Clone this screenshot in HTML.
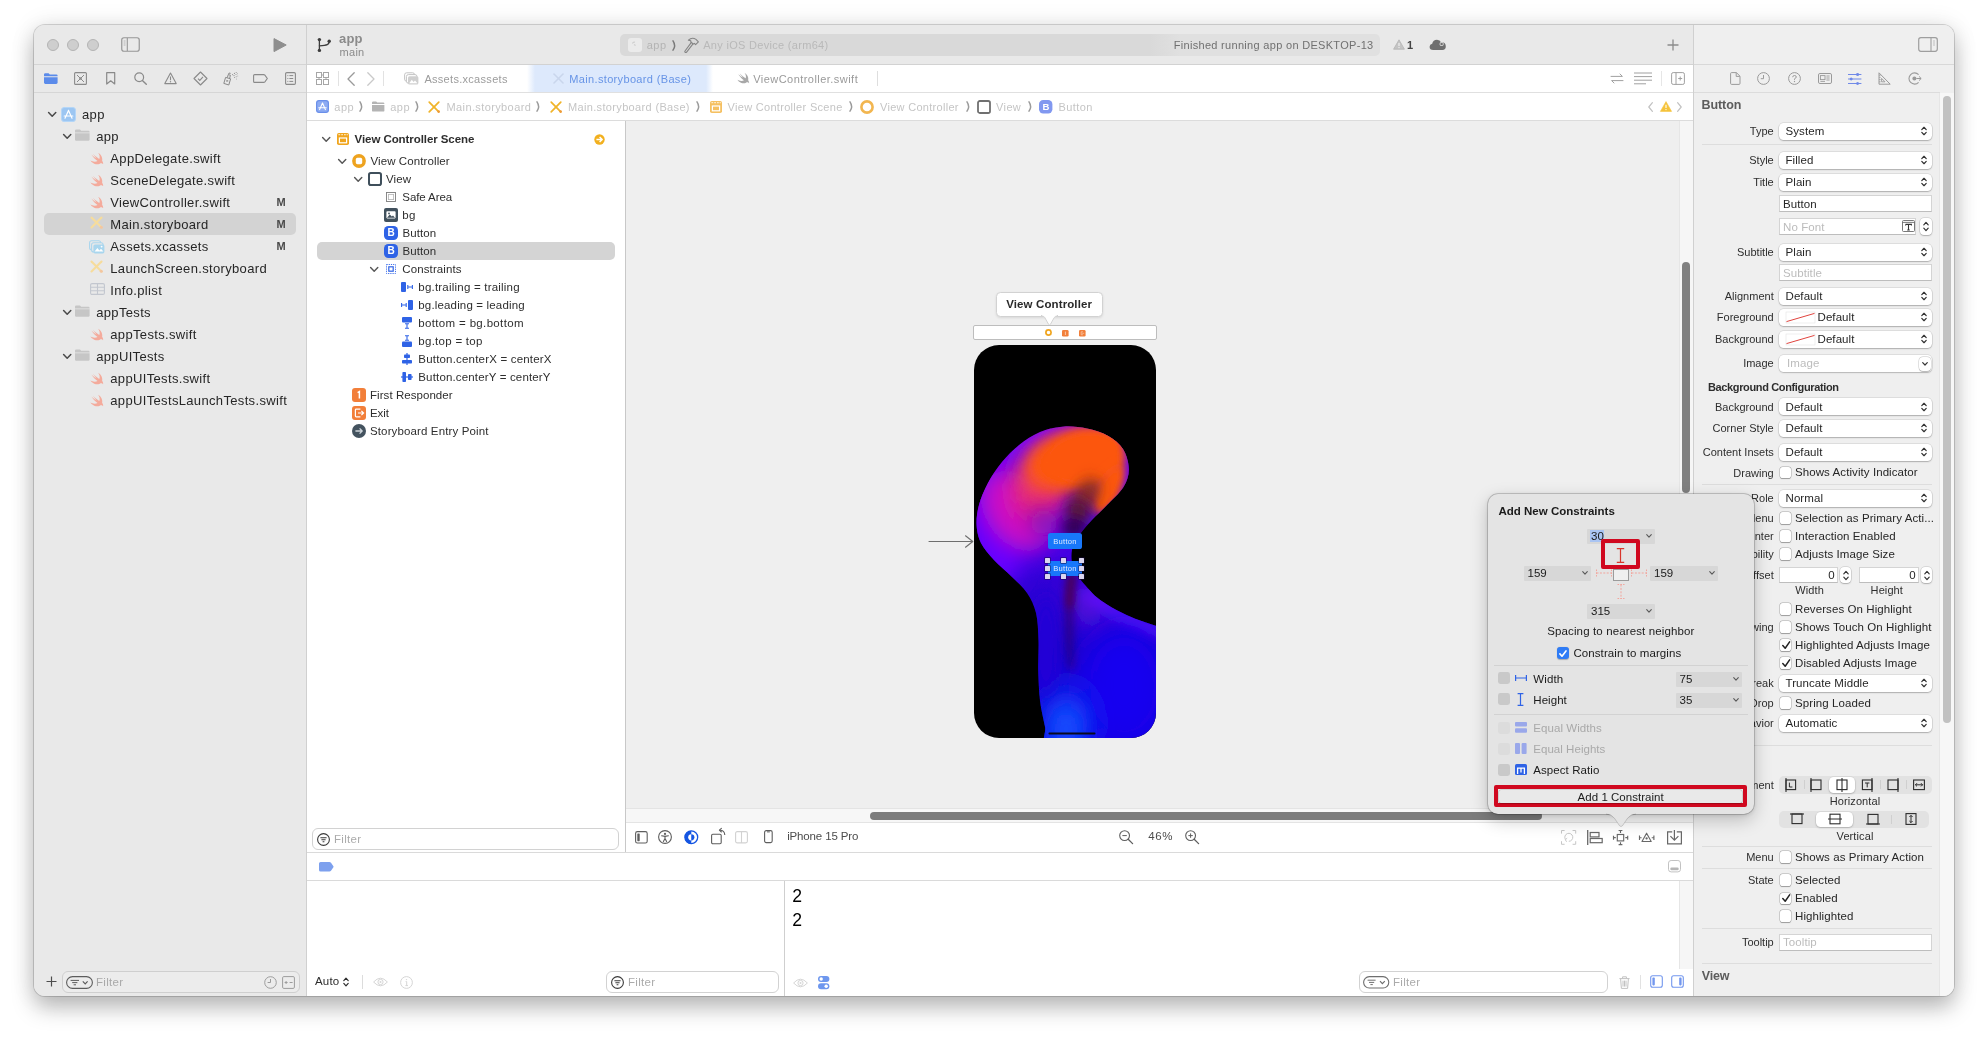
<!DOCTYPE html><html><head><meta charset="utf-8"><title>Xcode</title><style>
*{box-sizing:border-box;margin:0;padding:0}
html,body{width:1988px;height:1038px;overflow:hidden;background:#fff}
body{font-family:"Liberation Sans",sans-serif;position:relative;color:#2b2b2b}
.a{position:absolute}
.t{position:absolute;white-space:pre;line-height:1}
#clip{will-change:transform}
svg{position:absolute;overflow:visible}
#win{position:absolute;left:34px;top:25px;width:1920px;height:971px;border-radius:11px;background:#e9e9e9;
 box-shadow:0 0 0 1px rgba(0,0,0,.15),0 12px 22px rgba(0,0,0,.25),0 0 24px rgba(0,0,0,.10);overflow:hidden}
#clip{position:absolute;left:34px;top:25px;width:1920px;height:971px;border-radius:11px;overflow:hidden}
</style></head><body><div id="win"></div>
<div id="clip">
<div class="a" style="left:-34px;top:-25px;width:1988px;height:1038px">
<div class="a" style="left:34px;top:25px;width:1920px;height:40px;background:#e9e9e9;"></div>
<div class="a" style="left:34px;top:64px;width:273px;height:1px;background:#d4d4d4;"></div>
<div class="a" style="left:34px;top:65px;width:272px;height:28px;background:#e9e9e9;"></div>
<div class="a" style="left:34px;top:92px;width:272px;height:1px;background:#d6d6d6;"></div>
<div class="a" style="left:34px;top:93px;width:272px;height:903px;background:#e9e9e9;"></div>
<div class="a" style="left:306px;top:25px;width:1px;height:971px;background:#d0d0d0;"></div>
<div class="a" style="left:307px;top:64px;width:1387px;height:1px;background:#d2d2d2;"></div>
<div class="a" style="left:307px;top:65px;width:1387px;height:27px;background:#ffffff;"></div>
<div class="a" style="left:307px;top:92px;width:1387px;height:1px;background:#e0e0e0;"></div>
<div class="a" style="left:307px;top:93px;width:1387px;height:27px;background:#ffffff;"></div>
<div class="a" style="left:307px;top:120px;width:1387px;height:1px;background:#dcdcdc;"></div>
<div class="a" style="left:307px;top:121px;width:318px;height:731px;background:#ffffff;"></div>
<div class="a" style="left:625px;top:121px;width:1px;height:731px;background:#c8c8c8;"></div>
<div class="a" style="left:626px;top:121px;width:1068px;height:687px;background:#efefef;"></div>
<div class="a" style="left:626px;top:808px;width:1068px;height:15px;background:#f7f7f7;"></div>
<div class="a" style="left:626px;top:808px;width:1068px;height:1px;background:#e4e4e4;"></div>
<div class="a" style="left:626px;top:822px;width:1068px;height:1px;background:#e4e4e4;"></div>
<div class="a" style="left:626px;top:823px;width:1068px;height:29px;background:#ffffff;"></div>
<div class="a" style="left:307px;top:852px;width:1387px;height:1px;background:#dadada;"></div>
<div class="a" style="left:307px;top:853px;width:1387px;height:27px;background:#ffffff;"></div>
<div class="a" style="left:307px;top:880px;width:1387px;height:1px;background:#dadada;"></div>
<div class="a" style="left:307px;top:881px;width:1387px;height:115px;background:#ffffff;"></div>
<div class="a" style="left:784px;top:881px;width:1px;height:115px;background:#cfcfcf;"></div>
<div class="a" style="left:1693px;top:25px;width:1px;height:971px;background:#d0d0d0;"></div>
<div class="a" style="left:1694px;top:25px;width:260px;height:40px;background:#efefef;"></div>
<div class="a" style="left:1694px;top:64px;width:260px;height:1px;background:#d8d8d8;"></div>
<div class="a" style="left:1694px;top:65px;width:260px;height:931px;background:#efefef;"></div>
<div class="a" style="left:1694px;top:92px;width:246px;height:1px;background:#dcdcdc;"></div>
<div class="a" style="left:1939px;top:93px;width:15px;height:903px;background:#f7f7f7;"></div>
<div class="a" style="left:1939px;top:93px;width:1px;height:903px;background:#e6e6e6;"></div>
<div class="a" style="left:47px;top:39px;width:12px;height:12px;background:#cecece;border-radius:50%;border:1px solid #b4b4b4;"></div>
<div class="a" style="left:67px;top:39px;width:12px;height:12px;background:#cecece;border-radius:50%;border:1px solid #b4b4b4;"></div>
<div class="a" style="left:87px;top:39px;width:12px;height:12px;background:#cecece;border-radius:50%;border:1px solid #b4b4b4;"></div>
<svg style="left:121px;top:37px;" width="19" height="15" viewBox="0 0 19 15"><rect x="0.75" y="0.75" width="17.5" height="13.5" rx="2.2" fill="none" stroke="#969696" stroke-width="1.2"/><line x1="6.3" y1="1" x2="6.3" y2="14" stroke="#969696" stroke-width="1.1"/><path d="M2.7 4h1.8M2.7 6h1.8M2.7 8h1.8" stroke="#a8a8a8" stroke-width=".8"/></svg>
<svg style="left:273px;top:38px;" width="14" height="14" viewBox="0 0 14 14"><path d="M1 0.6 L13.2 7 L1 13.6 Z" fill="#8e8e8e" stroke="#8e8e8e" stroke-width="1" stroke-linejoin="round"/></svg>
<svg style="left:316.5px;top:36.5px;" width="15" height="16" viewBox="0 0 15 16"><g fill="none" stroke="#3c3c3c" stroke-width="1.3" stroke-linecap="round"><path d="M2.4 3V13"/><path d="M12.2 4.6 C12.2 7.6 10.4 8.4 2.4 8.8"/></g><circle cx="2.4" cy="2.6" r="1.7" fill="#3c3c3c"/><circle cx="2.4" cy="13.4" r="1.7" fill="#3c3c3c"/><circle cx="12.2" cy="4.2" r="1.7" fill="#3c3c3c"/></svg>
<div class="t" style="left:339px;top:32.0px;font-size:13px;color:#8b8b8b;font-weight:700;letter-spacing:0.2px;">app</div>
<div class="t" style="left:339.5px;top:46.5px;font-size:11px;color:#8b8b8b;font-weight:400;letter-spacing:0.3px;">main</div>
<svg style="left:44px;top:72px;" width="14" height="13" viewBox="0 0 14 13"><path d="M0 2.6 Q0 1.2 1.4 1.2 H4.6 L5.8 2.4 H12.4 Q13.6 2.4 13.6 3.6 V4.2 H0Z" fill="#5b8bea"/><path d="M0 5.2 H13.6 V10.6 Q13.6 12 12.2 12 H1.4 Q0 12 0 10.6Z" fill="#5b8bea"/></svg>
<svg style="left:74px;top:72px;" width="13" height="13" viewBox="0 0 13 13"><rect x=".6" y=".6" width="11.8" height="11.8" rx="1" fill="none" stroke="#8a8a8a" stroke-width="1.1"/><path d="M3 3 L10 10 M10 3 L3 10" stroke="#8a8a8a" stroke-width="1"/><circle cx="6.5" cy="6.5" r="1.2" fill="#8a8a8a"/></svg>
<svg style="left:106px;top:72px;" width="10" height="13" viewBox="0 0 10 13"><path d="M.7 .7 H8.7 V12 L4.7 8.8 L.7 12Z" fill="none" stroke="#8a8a8a" stroke-width="1.2" stroke-linejoin="round"/></svg>
<svg style="left:134px;top:72px;" width="13" height="13" viewBox="0 0 13 13"><circle cx="5.2" cy="5.2" r="4.4" fill="none" stroke="#8a8a8a" stroke-width="1.2"/><path d="M8.4 8.4 L12.3 12.3" stroke="#8a8a8a" stroke-width="1.4" stroke-linecap="round"/></svg>
<svg style="left:164px;top:72px;" width="13" height="13" viewBox="0 0 13 13"><path d="M6.5 1 L12.2 11.6 H.8Z" fill="none" stroke="#8a8a8a" stroke-width="1.1" stroke-linejoin="round"/><path d="M6.5 4.6V8.2" stroke="#8a8a8a" stroke-width="1.1"/><circle cx="6.5" cy="9.8" r=".7" fill="#8a8a8a"/></svg>
<svg style="left:193px;top:71px;" width="15" height="15" viewBox="0 0 15 15"><path d="M7.5 1 L14 7.5 L7.5 14 L1 7.5Z" fill="none" stroke="#8a8a8a" stroke-width="1.1" stroke-linejoin="round"/><path d="M5 7.6 L6.8 9.4 L10 5.8" fill="none" stroke="#8a8a8a" stroke-width="1.1"/></svg>
<svg style="left:223px;top:71px;" width="16" height="15" viewBox="0 0 16 15"><g fill="none" stroke="#8a8a8a" stroke-width="1"><path d="M2.6 6.4 L7.6 7.8 L5.8 14 L.8 12.4Z" stroke-linejoin="round"/><path d="M4.4 6.6 L5.2 3.6 L7.4 4.2 L6.6 7.4"/><path d="M5.6 3.4 L6 2 L7.6 2.4"/><path d="M3.2 9.2l2 1.4M5.2 9l-1.8 1.8" stroke-width=".8"/></g><g fill="#8a8a8a"><circle cx="9.6" cy="3.6" r=".55"/><circle cx="11.4" cy="2.4" r=".55"/><circle cx="13.2" cy="1.4" r=".5"/><circle cx="11" cy="4.6" r=".55"/><circle cx="13" cy="3.6" r=".5"/><circle cx="14.6" cy="2.8" r=".45"/><circle cx="11.6" cy="6.6" r=".5"/><circle cx="13.2" cy="5.8" r=".5"/><circle cx="14.8" cy="5" r=".45"/><circle cx="13.4" cy="8" r=".45"/></g></svg>
<svg style="left:253px;top:74px;" width="15" height="9" viewBox="0 0 15 9"><path d="M1.6 .6 H10.6 Q11.4 .6 11.9 1.2 L14.3 4.5 L11.9 7.8 Q11.4 8.4 10.6 8.4 H1.6 Q.6 8.4 .6 7.4 V1.6 Q.6 .6 1.6 .6Z" fill="none" stroke="#8a8a8a" stroke-width="1.1"/></svg>
<svg style="left:285px;top:72px;" width="11" height="13" viewBox="0 0 11 13"><rect x=".6" y=".6" width="9.8" height="11.8" rx="1.2" fill="none" stroke="#8a8a8a" stroke-width="1.1"/><path d="M4.4 3.6H8.2M4.4 6.5H8.2M4.4 9.4H8.2" stroke="#8a8a8a" stroke-width="1"/><path d="M2.4 3.6h.9M2.4 6.5h.9M2.4 9.4h.9" stroke="#8a8a8a" stroke-width="1"/></svg>
<div class="a" style="left:44px;top:213px;width:252px;height:22px;background:#d3d3d3;border-radius:5px;"></div>
<svg style="left:48.3px;top:112.1px;" width="8.4" height="4.8" viewBox="0 0 8.4 4.8"><path d="M.6 .5 L4.2 4.3 L7.800000000000001 .5" fill="none" stroke="#4a4a4a" stroke-width="1.5" stroke-linecap="round" stroke-linejoin="round"/></svg>
<svg style="left:61px;top:107.0px;" width="15" height="15" viewBox="0 0 15 15"><rect x=".5" y=".5" width="14" height="14" rx="2.6" fill="#9cc6f2" stroke="#b4d6f8" stroke-width="1"/><g stroke="#fff" stroke-width="1.2" stroke-linecap="round" fill="none"><path d="M7.5 3.4 L4 11.2M7.5 3.4 L11 11.2M3.2 9 H11.8"/></g></svg>
<div class="t" style="left:82px;top:108.0px;font-size:13px;color:#262626;font-weight:400;letter-spacing:0.34px;">app</div>
<svg style="left:62.6px;top:134.1px;" width="8.4" height="4.8" viewBox="0 0 8.4 4.8"><path d="M.6 .5 L4.2 4.3 L7.800000000000001 .5" fill="none" stroke="#4a4a4a" stroke-width="1.5" stroke-linecap="round" stroke-linejoin="round"/></svg>
<svg style="left:75px;top:129.0px;" width="15" height="12" viewBox="0 0 15 12"><path d="M0 1.8 Q0 .5 1.3 .5 H5 L6.2 1.7 H13.4 Q14.6 1.7 14.6 2.9 V3.4 H0Z" fill="#c6c6c6"/><path d="M0 4.3 H14.6 V10.4 Q14.6 11.7 13.3 11.7 H1.3 Q0 11.7 0 10.4Z" fill="#c6c6c6"/></svg>
<div class="t" style="left:96.2px;top:130.0px;font-size:13px;color:#262626;font-weight:400;letter-spacing:0.34px;">app</div>
<svg style="left:90px;top:151.5px;" width="14" height="14" viewBox="0 0 14 14"><path transform="translate(-1.6,-1.8) scale(0.72)" d="M13.543 3.41c4.114 2.47 6.545 7.162 5.549 11.131-.024.093-.05.181-.076.272l.002.001c2.062 2.538 1.5 5.258 1.236 4.745-1.072-2.086-3.066-1.568-4.088-1.043a6.803 6.803 0 0 1-.281.158l-.02.012-.002.002c-2.115 1.123-4.957 1.205-7.812-.022a12.568 12.568 0 0 1-5.64-4.838c.649.48 1.35.902 2.097 1.252 3.019 1.414 6.051 1.311 8.197-.002C9.651 12.73 7.101 9.67 5.146 7.191a10.628 10.628 0 0 1-1.005-1.384c2.34 2.142 6.038 4.83 7.365 5.576C8.69 8.408 6.208 4.743 6.324 4.86c4.436 4.47 8.528 6.996 8.528 6.996.154.085.27.154.36.213.085-.215.16-.437.224-.668.708-2.588-.09-5.548-1.893-7.992z" fill="#f4ab9c"/></svg>
<div class="t" style="left:110.3px;top:152.0px;font-size:13px;color:#262626;font-weight:400;letter-spacing:0.34px;">AppDelegate.swift</div>
<svg style="left:90px;top:173.5px;" width="14" height="14" viewBox="0 0 14 14"><path transform="translate(-1.6,-1.8) scale(0.72)" d="M13.543 3.41c4.114 2.47 6.545 7.162 5.549 11.131-.024.093-.05.181-.076.272l.002.001c2.062 2.538 1.5 5.258 1.236 4.745-1.072-2.086-3.066-1.568-4.088-1.043a6.803 6.803 0 0 1-.281.158l-.02.012-.002.002c-2.115 1.123-4.957 1.205-7.812-.022a12.568 12.568 0 0 1-5.64-4.838c.649.48 1.35.902 2.097 1.252 3.019 1.414 6.051 1.311 8.197-.002C9.651 12.73 7.101 9.67 5.146 7.191a10.628 10.628 0 0 1-1.005-1.384c2.34 2.142 6.038 4.83 7.365 5.576C8.69 8.408 6.208 4.743 6.324 4.86c4.436 4.47 8.528 6.996 8.528 6.996.154.085.27.154.36.213.085-.215.16-.437.224-.668.708-2.588-.09-5.548-1.893-7.992z" fill="#f4ab9c"/></svg>
<div class="t" style="left:110.3px;top:174.0px;font-size:13px;color:#262626;font-weight:400;letter-spacing:0.34px;">SceneDelegate.swift</div>
<svg style="left:90px;top:195.5px;" width="14" height="14" viewBox="0 0 14 14"><path transform="translate(-1.6,-1.8) scale(0.72)" d="M13.543 3.41c4.114 2.47 6.545 7.162 5.549 11.131-.024.093-.05.181-.076.272l.002.001c2.062 2.538 1.5 5.258 1.236 4.745-1.072-2.086-3.066-1.568-4.088-1.043a6.803 6.803 0 0 1-.281.158l-.02.012-.002.002c-2.115 1.123-4.957 1.205-7.812-.022a12.568 12.568 0 0 1-5.64-4.838c.649.48 1.35.902 2.097 1.252 3.019 1.414 6.051 1.311 8.197-.002C9.651 12.73 7.101 9.67 5.146 7.191a10.628 10.628 0 0 1-1.005-1.384c2.34 2.142 6.038 4.83 7.365 5.576C8.69 8.408 6.208 4.743 6.324 4.86c4.436 4.47 8.528 6.996 8.528 6.996.154.085.27.154.36.213.085-.215.16-.437.224-.668.708-2.588-.09-5.548-1.893-7.992z" fill="#f4ab9c"/></svg>
<div class="t" style="left:110.3px;top:196.0px;font-size:13px;color:#262626;font-weight:400;letter-spacing:0.34px;">ViewController.swift</div>
<div class="t" style="left:276.5px;top:197.0px;font-size:11px;color:#4a4a4a;font-weight:700;letter-spacing:0px;">M</div>
<svg style="left:90px;top:216.4px;" width="13" height="13" viewBox="0 0 13 13"><g stroke="#f6dc9c" stroke-width="2.1" stroke-linecap="round"><path d="M1.5 1.5 L11.5 11.5"/><path d="M11.5 1.5 L1.5 11.5"/></g><circle cx="11.3" cy="11.3" r="1.5" fill="#f3c6a0"/></svg>
<div class="t" style="left:110.3px;top:218.0px;font-size:13px;color:#262626;font-weight:400;letter-spacing:0.34px;">Main.storyboard</div>
<div class="t" style="left:276.5px;top:219.0px;font-size:11px;color:#4a4a4a;font-weight:700;letter-spacing:0px;">M</div>
<svg style="left:88.5px;top:239.5px;" width="16" height="14" viewBox="0 0 16 14"><rect x=".6" y=".8" width="11" height="9" rx="2" fill="none" stroke="#a9d6ee" stroke-width="1.1"/><rect x="2.6" y="2.8" width="11.5" height="9.2" rx="2" fill="#e9e9e9" stroke="#a9d6ee" stroke-width="1.1"/><rect x="4.4" y="4.4" width="11" height="9" rx="1.6" fill="#a9d6ee"/><path d="M5.6 11.6 L8.4 8 L10.4 10.4 L12 8.8 L14.4 11.6Z" fill="#fff"/><circle cx="12.6" cy="6.6" r=".9" fill="#fff"/></svg>
<div class="t" style="left:110.3px;top:240.0px;font-size:13px;color:#262626;font-weight:400;letter-spacing:0.34px;">Assets.xcassets</div>
<div class="t" style="left:276.5px;top:241.0px;font-size:11px;color:#4a4a4a;font-weight:700;letter-spacing:0px;">M</div>
<svg style="left:90px;top:260.4px;" width="13" height="13" viewBox="0 0 13 13"><g stroke="#f6dc9c" stroke-width="2.1" stroke-linecap="round"><path d="M1.5 1.5 L11.5 11.5"/><path d="M11.5 1.5 L1.5 11.5"/></g><circle cx="11.3" cy="11.3" r="1.5" fill="#f3c6a0"/></svg>
<div class="t" style="left:110.3px;top:262.0px;font-size:13px;color:#262626;font-weight:400;letter-spacing:0.34px;">LaunchScreen.storyboard</div>
<svg style="left:89.5px;top:282.9px;" width="15" height="12" viewBox="0 0 15 12"><rect x=".6" y=".6" width="13.8" height="10.8" rx="1.4" fill="none" stroke="#c3c7cf" stroke-width="1.1"/><path d="M7.5 .6V11.4M.6 4.2H14.4M.6 7.8H14.4" stroke="#c3c7cf" stroke-width="1.1"/></svg>
<div class="t" style="left:110.3px;top:284.0px;font-size:13px;color:#262626;font-weight:400;letter-spacing:0.34px;">Info.plist</div>
<svg style="left:62.6px;top:310.1px;" width="8.4" height="4.8" viewBox="0 0 8.4 4.8"><path d="M.6 .5 L4.2 4.3 L7.800000000000001 .5" fill="none" stroke="#4a4a4a" stroke-width="1.5" stroke-linecap="round" stroke-linejoin="round"/></svg>
<svg style="left:75px;top:305.0px;" width="15" height="12" viewBox="0 0 15 12"><path d="M0 1.8 Q0 .5 1.3 .5 H5 L6.2 1.7 H13.4 Q14.6 1.7 14.6 2.9 V3.4 H0Z" fill="#c6c6c6"/><path d="M0 4.3 H14.6 V10.4 Q14.6 11.7 13.3 11.7 H1.3 Q0 11.7 0 10.4Z" fill="#c6c6c6"/></svg>
<div class="t" style="left:96.2px;top:306.0px;font-size:13px;color:#262626;font-weight:400;letter-spacing:0.34px;">appTests</div>
<svg style="left:90px;top:327.5px;" width="14" height="14" viewBox="0 0 14 14"><path transform="translate(-1.6,-1.8) scale(0.72)" d="M13.543 3.41c4.114 2.47 6.545 7.162 5.549 11.131-.024.093-.05.181-.076.272l.002.001c2.062 2.538 1.5 5.258 1.236 4.745-1.072-2.086-3.066-1.568-4.088-1.043a6.803 6.803 0 0 1-.281.158l-.02.012-.002.002c-2.115 1.123-4.957 1.205-7.812-.022a12.568 12.568 0 0 1-5.64-4.838c.649.48 1.35.902 2.097 1.252 3.019 1.414 6.051 1.311 8.197-.002C9.651 12.73 7.101 9.67 5.146 7.191a10.628 10.628 0 0 1-1.005-1.384c2.34 2.142 6.038 4.83 7.365 5.576C8.69 8.408 6.208 4.743 6.324 4.86c4.436 4.47 8.528 6.996 8.528 6.996.154.085.27.154.36.213.085-.215.16-.437.224-.668.708-2.588-.09-5.548-1.893-7.992z" fill="#f4ab9c"/></svg>
<div class="t" style="left:110.3px;top:328.0px;font-size:13px;color:#262626;font-weight:400;letter-spacing:0.34px;">appTests.swift</div>
<svg style="left:62.6px;top:354.1px;" width="8.4" height="4.8" viewBox="0 0 8.4 4.8"><path d="M.6 .5 L4.2 4.3 L7.800000000000001 .5" fill="none" stroke="#4a4a4a" stroke-width="1.5" stroke-linecap="round" stroke-linejoin="round"/></svg>
<svg style="left:75px;top:349.0px;" width="15" height="12" viewBox="0 0 15 12"><path d="M0 1.8 Q0 .5 1.3 .5 H5 L6.2 1.7 H13.4 Q14.6 1.7 14.6 2.9 V3.4 H0Z" fill="#c6c6c6"/><path d="M0 4.3 H14.6 V10.4 Q14.6 11.7 13.3 11.7 H1.3 Q0 11.7 0 10.4Z" fill="#c6c6c6"/></svg>
<div class="t" style="left:96.2px;top:350.0px;font-size:13px;color:#262626;font-weight:400;letter-spacing:0.34px;">appUITests</div>
<svg style="left:90px;top:371.5px;" width="14" height="14" viewBox="0 0 14 14"><path transform="translate(-1.6,-1.8) scale(0.72)" d="M13.543 3.41c4.114 2.47 6.545 7.162 5.549 11.131-.024.093-.05.181-.076.272l.002.001c2.062 2.538 1.5 5.258 1.236 4.745-1.072-2.086-3.066-1.568-4.088-1.043a6.803 6.803 0 0 1-.281.158l-.02.012-.002.002c-2.115 1.123-4.957 1.205-7.812-.022a12.568 12.568 0 0 1-5.64-4.838c.649.48 1.35.902 2.097 1.252 3.019 1.414 6.051 1.311 8.197-.002C9.651 12.73 7.101 9.67 5.146 7.191a10.628 10.628 0 0 1-1.005-1.384c2.34 2.142 6.038 4.83 7.365 5.576C8.69 8.408 6.208 4.743 6.324 4.86c4.436 4.47 8.528 6.996 8.528 6.996.154.085.27.154.36.213.085-.215.16-.437.224-.668.708-2.588-.09-5.548-1.893-7.992z" fill="#f4ab9c"/></svg>
<div class="t" style="left:110.3px;top:372.0px;font-size:13px;color:#262626;font-weight:400;letter-spacing:0.34px;">appUITests.swift</div>
<svg style="left:90px;top:393.5px;" width="14" height="14" viewBox="0 0 14 14"><path transform="translate(-1.6,-1.8) scale(0.72)" d="M13.543 3.41c4.114 2.47 6.545 7.162 5.549 11.131-.024.093-.05.181-.076.272l.002.001c2.062 2.538 1.5 5.258 1.236 4.745-1.072-2.086-3.066-1.568-4.088-1.043a6.803 6.803 0 0 1-.281.158l-.02.012-.002.002c-2.115 1.123-4.957 1.205-7.812-.022a12.568 12.568 0 0 1-5.64-4.838c.649.48 1.35.902 2.097 1.252 3.019 1.414 6.051 1.311 8.197-.002C9.651 12.73 7.101 9.67 5.146 7.191a10.628 10.628 0 0 1-1.005-1.384c2.34 2.142 6.038 4.83 7.365 5.576C8.69 8.408 6.208 4.743 6.324 4.86c4.436 4.47 8.528 6.996 8.528 6.996.154.085.27.154.36.213.085-.215.16-.437.224-.668.708-2.588-.09-5.548-1.893-7.992z" fill="#f4ab9c"/></svg>
<div class="t" style="left:110.3px;top:394.0px;font-size:13px;color:#262626;font-weight:400;letter-spacing:0.34px;">appUITestsLaunchTests.swift</div>
<svg style="left:46px;top:976px;" width="11" height="11" viewBox="0 0 11 11"><path d="M5.5 .5V10.5M.5 5.5H10.5" stroke="#4d4d4d" stroke-width="1.2"/></svg>
<div class="a" style="left:62px;top:971px;width:238px;height:22px;background:#ececec;border-radius:6px;border:1px solid #cfcfcf;"></div>
<svg style="left:66px;top:976px;" width="27" height="13" viewBox="0 0 27 13"><rect x=".6" y=".6" width="25.8" height="11.8" rx="5.9" fill="none" stroke="#5c5c5c" stroke-width="1.1"/><path d="M4.6 4.4H13M6.2 6.6H11.4M7.6 8.8H10" stroke="#5c5c5c" stroke-width="1"/><path d="M16.8 5.4 L19.2 7.8 L21.6 5.4" fill="none" stroke="#5c5c5c" stroke-width="1.2"/></svg>
<div class="t" style="left:96px;top:976.9px;font-size:11.5px;color:#a9a9a9;font-weight:400;letter-spacing:0.3px;">Filter</div>
<svg style="left:264px;top:976px;" width="13" height="13" viewBox="0 0 13 13"><circle cx="6.5" cy="6.5" r="5.8" fill="none" stroke="#9c9c9c" stroke-width="1"/><path d="M6.5 3V6.5H3.6" fill="none" stroke="#9c9c9c" stroke-width="1"/></svg>
<svg style="left:282px;top:976px;" width="13" height="13" viewBox="0 0 13 13"><rect x=".6" y=".6" width="11.8" height="11.8" rx="1.2" fill="none" stroke="#9c9c9c" stroke-width="1"/><path d="M2.6 6.5h3M4.1 5v3M7.6 6.5h3" stroke="#9c9c9c" stroke-width="1"/></svg>
<svg style="left:316px;top:72px;" width="13" height="13" viewBox="0 0 13 13"><g fill="none" stroke="#a6a6a6" stroke-width="1"><rect x=".5" y=".5" width="5" height="5"/><rect x="7.5" y=".5" width="5" height="5"/><rect x=".5" y="7.5" width="5" height="5"/><rect x="7.5" y="7.5" width="5" height="5"/><path d="M5.5 3h2M3 5.5v2M10 5.5v2"/></g></svg>
<div class="a" style="left:338px;top:71px;width:1px;height:15px;background:#e2e2e2;"></div>
<svg style="left:347px;top:72px;" width="8" height="14" viewBox="0 0 8 14"><path d="M7.2 .8 L1 7 L7.2 13.2" fill="none" stroke="#9a9a9a" stroke-width="1.3" stroke-linecap="round" stroke-linejoin="round"/></svg>
<svg style="left:367px;top:72px;" width="8" height="14" viewBox="0 0 8 14"><path d="M.8 .8 L7 7 L.8 13.2" fill="none" stroke="#c9c9c9" stroke-width="1.3" stroke-linecap="round" stroke-linejoin="round"/></svg>
<div class="a" style="left:383px;top:71px;width:1px;height:15px;background:#e2e2e2;"></div>
<svg style="left:404px;top:72px;" width="15" height="13" viewBox="0 0 15 13"><rect x=".6" y=".8" width="10" height="8.4" rx="2" fill="none" stroke="#c4c4c4" stroke-width="1"/><rect x="2.4" y="2.6" width="10.6" height="8.6" rx="2" fill="#fff" stroke="#c4c4c4" stroke-width="1"/><rect x="4" y="4.2" width="10.4" height="8.4" rx="1.6" fill="#cfcfcf"/><path d="M5.2 11.2 L7.8 7.8 L9.6 10 L11 8.6 L13.4 11.2Z" fill="#fff"/></svg>
<div class="t" style="left:424.4px;top:73.7px;font-size:11px;color:#9c9c9c;font-weight:400;letter-spacing:0.296px;">Assets.xcassets</div>
<div class="a" style="left:527px;top:65px;width:186px;height:27px;background:linear-gradient(90deg,rgba(221,233,252,0) 0,#dde9fc 8px,#dde9fc 179px,rgba(221,233,252,0) 186px)"></div>
<svg style="left:553px;top:73px;" width="11" height="11" viewBox="0 0 11 11"><g stroke="#c9d6ec" stroke-width="1.6" stroke-linecap="round"><path d="M1 1 L10 10"/><path d="M10 1 L1 10"/></g></svg>
<div class="t" style="left:569.3px;top:73.7px;font-size:11px;color:#6794e6;font-weight:400;letter-spacing:0.342px;">Main.storyboard (Base)</div>
<svg style="left:737px;top:72px;" width="13" height="13" viewBox="0 0 13 13"><path transform="translate(-1.4,-1.6) scale(.66)" d="M13.543 3.41c4.114 2.47 6.545 7.162 5.549 11.131-.024.093-.05.181-.076.272l.002.001c2.062 2.538 1.5 5.258 1.236 4.745-1.072-2.086-3.066-1.568-4.088-1.043a6.803 6.803 0 0 1-.281.158l-.02.012-.002.002c-2.115 1.123-4.957 1.205-7.812-.022a12.568 12.568 0 0 1-5.64-4.838c.649.48 1.35.902 2.097 1.252 3.019 1.414 6.051 1.311 8.197-.002C9.651 12.73 7.101 9.67 5.146 7.191a10.628 10.628 0 0 1-1.005-1.384c2.34 2.142 6.038 4.83 7.365 5.576C8.69 8.408 6.208 4.743 6.324 4.86c4.436 4.47 8.528 6.996 8.528 6.996.154.085.27.154.36.213.085-.215.16-.437.224-.668.708-2.588-.09-5.548-1.893-7.992z" fill="#a8a8a8"/></svg>
<div class="t" style="left:753.2px;top:73.7px;font-size:11px;color:#9a9a9a;font-weight:400;letter-spacing:0.459px;">ViewController.swift</div>
<div class="a" style="left:877px;top:71px;width:1px;height:15px;background:#dedede;"></div>
<svg style="left:1610px;top:73px;" width="14" height="11" viewBox="0 0 14 11"><g fill="none" stroke="#a0a0a0" stroke-width="1" stroke-linecap="round" stroke-linejoin="round"><path d="M1 3.4H12.4L10 1"/><path d="M13 7.6H1.6L4 10"/></g></svg>
<svg style="left:1634px;top:72px;" width="19" height="13" viewBox="0 0 19 13"><path d="M0 1H18M0 4.6H18M0 8.2H18M0 11.8H12" stroke="#a0a0a0" stroke-width="1"/></svg>
<div class="a" style="left:1661px;top:71px;width:1px;height:15px;background:#e6e6e6;"></div>
<svg style="left:1671px;top:72px;" width="14" height="13" viewBox="0 0 14 13"><rect x=".6" y=".6" width="12.8" height="11.8" rx="1.6" fill="none" stroke="#a0a0a0" stroke-width="1"/><path d="M5 .6V12.4" stroke="#a0a0a0" stroke-width="1"/><path d="M7.2 6.5h4M9.2 4.5v4" stroke="#a0a0a0" stroke-width="1"/></svg>
<svg style="left:316px;top:100px;" width="13" height="13" viewBox="0 0 13 13"><rect x=".6" y=".6" width="11.8" height="11.8" rx="2.4" fill="#8dabf2" stroke="#6a8fea" stroke-width="1.2"/><g stroke="#fff" stroke-width="1.1" stroke-linecap="round" fill="none"><path d="M6.5 3 L3.6 9.6M6.5 3 L9.4 9.6M2.8 7.8 H10.2"/></g></svg>
<div class="t" style="left:334.3px;top:101.7px;font-size:11px;color:#c5c5c5;font-weight:400;letter-spacing:0.524px;">app</div>
<svg style="left:359.3px;top:101.0px;" width="5" height="11" viewBox="0 0 5 11"><path d="M1 .8 Q4.2 5.5 1 10.2" fill="none" stroke="#9b9b9b" stroke-width="1.5" stroke-linecap="round"/></svg>
<svg style="left:372px;top:100.5px;" width="12.4" height="10.6" viewBox="0 0 12.4 10.6"><path d="M0 1.6 Q0 .4 1.2 .4 H4.2 L5.2 1.5 H11.2 Q12.4 1.5 12.4 2.7 V3 H0Z" fill="#b4b4b4"/><path d="M0 3.9 H12.4 V9.4 Q12.4 10.6 11.2 10.6 H1.2 Q0 10.6 0 9.4Z" fill="#b4b4b4"/></svg>
<div class="t" style="left:390.2px;top:101.7px;font-size:11px;color:#c5c5c5;font-weight:400;letter-spacing:0.524px;">app</div>
<svg style="left:414.6px;top:101.0px;" width="5" height="11" viewBox="0 0 5 11"><path d="M1 .8 Q4.2 5.5 1 10.2" fill="none" stroke="#9b9b9b" stroke-width="1.5" stroke-linecap="round"/></svg>
<svg style="left:427.8px;top:100.5px;" width="12" height="12" viewBox="0 0 12 12"><g stroke="#f0b429" stroke-width="1.7" stroke-linecap="round"><path d="M1.2 1.2 L10.8 10.8"/><path d="M10.8 1.2 L1.2 10.8"/></g><circle cx="10.6" cy="10.6" r="1.3" fill="#ee9a3a"/></svg>
<div class="t" style="left:446.5px;top:101.7px;font-size:11px;color:#c5c5c5;font-weight:400;letter-spacing:0.388px;">Main.storyboard</div>
<svg style="left:536.2px;top:101.0px;" width="5" height="11" viewBox="0 0 5 11"><path d="M1 .8 Q4.2 5.5 1 10.2" fill="none" stroke="#9b9b9b" stroke-width="1.5" stroke-linecap="round"/></svg>
<svg style="left:549.5px;top:100.5px;" width="12" height="12" viewBox="0 0 12 12"><g stroke="#f0b429" stroke-width="1.7" stroke-linecap="round"><path d="M1.2 1.2 L10.8 10.8"/><path d="M10.8 1.2 L1.2 10.8"/></g><circle cx="10.6" cy="10.6" r="1.3" fill="#ee9a3a"/></svg>
<div class="t" style="left:568px;top:101.7px;font-size:11px;color:#c5c5c5;font-weight:400;letter-spacing:0.342px;">Main.storyboard (Base)</div>
<svg style="left:696px;top:101.0px;" width="5" height="11" viewBox="0 0 5 11"><path d="M1 .8 Q4.2 5.5 1 10.2" fill="none" stroke="#9b9b9b" stroke-width="1.5" stroke-linecap="round"/></svg>
<svg style="left:709.5px;top:100.5px;" width="12" height="12" viewBox="0 0 12 12"><rect x="0" y="0" width="12" height="12" rx="1.8" fill="#f5c061"/><rect x="2.4" y="5" width="7.2" height="4.8" fill="none" stroke="#fff" stroke-width="1.2"/><path d="M1.4 1.6h1.8M4.2 1.6h1.8M7 1.6h1.8M9.6 1.6h1.2" stroke="#fdecc9" stroke-width="1.1"/></svg>
<div class="t" style="left:727.5px;top:101.7px;font-size:11px;color:#c5c5c5;font-weight:400;letter-spacing:0.309px;">View Controller Scene</div>
<svg style="left:849px;top:101.0px;" width="5" height="11" viewBox="0 0 5 11"><path d="M1 .8 Q4.2 5.5 1 10.2" fill="none" stroke="#9b9b9b" stroke-width="1.5" stroke-linecap="round"/></svg>
<svg style="left:860px;top:99.5px;" width="14" height="14" viewBox="0 0 14 14"><circle cx="7" cy="7" r="5.6" fill="#fff" stroke="#f2b650" stroke-width="2.6"/><rect x="4.4" y="4.4" width="5.2" height="5.2" rx="1.2" fill="#fff"/></svg>
<div class="t" style="left:880px;top:101.7px;font-size:11px;color:#c5c5c5;font-weight:400;letter-spacing:0.294px;">View Controller</div>
<svg style="left:966px;top:101.0px;" width="5" height="11" viewBox="0 0 5 11"><path d="M1 .8 Q4.2 5.5 1 10.2" fill="none" stroke="#9b9b9b" stroke-width="1.5" stroke-linecap="round"/></svg>
<svg style="left:977px;top:99.5px;" width="14" height="14" viewBox="0 0 14 14"><rect x="1" y="1" width="12" height="12" rx="1.8" fill="#fff" stroke="#707070" stroke-width="1.8"/></svg>
<div class="t" style="left:996.1px;top:101.7px;font-size:11px;color:#c5c5c5;font-weight:400;letter-spacing:0.352px;">View</div>
<svg style="left:1027.6px;top:101.0px;" width="5" height="11" viewBox="0 0 5 11"><path d="M1 .8 Q4.2 5.5 1 10.2" fill="none" stroke="#9b9b9b" stroke-width="1.5" stroke-linecap="round"/></svg>
<svg style="left:1039px;top:99.8px;" width="13.4" height="13.4" viewBox="0 0 13.4 13.4"><rect x="0" y="0" width="13.4" height="13.4" rx="4.2" fill="#8198f0"/></svg>
<div class="t" style="left:1042.4px;top:102.0px;font-size:9.6px;color:#fff;font-weight:700;letter-spacing:0px;">B</div>
<div class="t" style="left:1058.5px;top:101.7px;font-size:11px;color:#c5c5c5;font-weight:400;letter-spacing:0.4px;">Button</div>
<div class="a" style="left:620px;top:34px;width:760px;height:22px;border-radius:5px;background:linear-gradient(90deg,#d9d9d9 0,#d9d9d9 530px,#e0e0e0 560px,#e0e0e0 100%)"></div>
<svg style="left:628px;top:38px;" width="14" height="14" viewBox="0 0 14 14"><rect x="0" y="0" width="14" height="14" rx="3" fill="#ebebeb"/><path d="M4.4 5.4 Q5.2 3.6 7 4.2 M6 6.4 l1.6 1" stroke="#cfcfcf" stroke-width="1.2" fill="none"/></svg>
<div class="t" style="left:646.8px;top:40.1px;font-size:11px;color:#b4b4b4;font-weight:400;letter-spacing:0.424px;">app</div>
<svg style="left:671.5px;top:39.5px;" width="5" height="11" viewBox="0 0 5 11"><path d="M1 .8 Q4.2 5.5 1 10.2" fill="none" stroke="#7a7a7a" stroke-width="1.5" stroke-linecap="round"/></svg>
<svg style="left:683px;top:37px;" width="17" height="16" viewBox="0 0 17 16"><g fill="none" stroke="#858585" stroke-width="1.1" stroke-linejoin="round"><path d="M8.2 5.6 L2 14 Q1.4 15 2.4 15.4 Q3.2 15.6 3.8 14.8 L10 6.8"/><path d="M5.4 3.2 Q9 -0.2 13 2.4 L15.4 4.8 L12.6 7.6 L11.4 6.4 L10.2 7 L7.8 5 Q8.6 3.4 5.4 3.2Z"/></g></svg>
<div class="t" style="left:703.2px;top:40.1px;font-size:11px;color:#b9b9b9;font-weight:400;letter-spacing:0.306px;">Any iOS Device (arm64)</div>
<div class="t" style="left:1173.7px;top:40.1px;font-size:11px;color:#707070;font-weight:400;letter-spacing:0.308px;">Finished running app on DESKTOP-13</div>
<svg style="left:1393px;top:39px;" width="12" height="11" viewBox="0 0 12 11"><path d="M6 .8 L11.4 10.2 H.6Z" fill="#c4c4c4" stroke="#b4b4b4" stroke-width=".8" stroke-linejoin="round"/><path d="M6 4V7" stroke="#f4f4f4" stroke-width="1.1"/><circle cx="6" cy="8.6" r=".65" fill="#f4f4f4"/></svg>
<div class="t" style="left:1407px;top:39.5px;font-size:11px;color:#444;font-weight:700;letter-spacing:0px;">1</div>
<svg style="left:1429px;top:39px;" width="18" height="12" viewBox="0 0 18 12"><path d="M4.2 11 Q.6 11 .6 7.8 Q.6 5.2 3.2 4.8 Q4 .8 8 .8 Q11 .8 12.2 3.4 Q16.6 3 16.8 7.2 Q16.8 11 13.4 11Z" fill="#6f6f6f"/><circle cx="12.6" cy="5" r="2.1" fill="#e9e9e9"/><circle cx="12.6" cy="5" r="1.3" fill="#6f6f6f"/></svg>
<svg style="left:1667px;top:39px;" width="12" height="12" viewBox="0 0 12 12"><path d="M6 .5V11.5M.5 6H11.5" stroke="#8c8c8c" stroke-width="1.3"/></svg>
<svg style="left:1918px;top:37px;" width="20" height="15" viewBox="0 0 20 15"><rect x=".7" y=".7" width="18.6" height="13.6" rx="2.2" fill="none" stroke="#9e9e9e" stroke-width="1.2"/><line x1="13" y1="1" x2="13" y2="14" stroke="#9e9e9e" stroke-width="1.1"/><path d="M15 4h2M15 6h2M15 8h2" stroke="#b4b4b4" stroke-width=".8"/></svg>
<svg style="left:1648px;top:101.5px;" width="5" height="10" viewBox="0 0 5 10"><path d="M4.4 .6 L.8 5 L4.4 9.4" fill="none" stroke="#c2c2c2" stroke-width="1.2" stroke-linecap="round" stroke-linejoin="round"/></svg>
<svg style="left:1660px;top:101px;" width="12" height="11" viewBox="0 0 12 11"><path d="M6 .6 L11.6 10.4 H.4Z" fill="#f5c33b" stroke="#f5c33b" stroke-width=".6" stroke-linejoin="round"/><path d="M6 3.8V7" stroke="#fff" stroke-width="1.1"/><circle cx="6" cy="8.6" r=".65" fill="#fff"/></svg>
<svg style="left:1677px;top:101.5px;" width="5" height="10" viewBox="0 0 5 10"><path d="M.6 .6 L4.2 5 L.6 9.4" fill="none" stroke="#c2c2c2" stroke-width="1.2" stroke-linecap="round" stroke-linejoin="round"/></svg>
<svg style="left:1729.5px;top:72px;" width="11" height="13" viewBox="0 0 11 13"><path d="M.6 1.6 Q.6 .6 1.6 .6 H6.4 L10 4.2 V11.4 Q10 12.4 9 12.4 H1.6 Q.6 12.4 .6 11.4Z" fill="none" stroke="#9a9a9a" stroke-width="1" stroke-linejoin="round"/><path d="M6.2 .8 V4.4 H9.8" fill="none" stroke="#9a9a9a" stroke-width="1"/></svg>
<svg style="left:1757px;top:72px;" width="13" height="13" viewBox="0 0 13 13"><circle cx="6.5" cy="6.5" r="5.9" fill="none" stroke="#9a9a9a" stroke-width="1"/><path d="M6.5 3V6.7H3.8" fill="none" stroke="#9a9a9a" stroke-width="1"/></svg>
<svg style="left:1787.5px;top:72px;" width="13" height="13" viewBox="0 0 13 13"><circle cx="6.5" cy="6.5" r="5.9" fill="none" stroke="#9a9a9a" stroke-width="1"/><path d="M4.7 5.2 Q4.7 3.5 6.5 3.5 Q8.3 3.5 8.3 5 Q8.3 6 6.5 6.8 V7.8" fill="none" stroke="#9a9a9a" stroke-width="1"/><circle cx="6.5" cy="9.5" r=".65" fill="#9a9a9a"/></svg>
<svg style="left:1817.5px;top:73px;" width="14" height="11" viewBox="0 0 14 11"><rect x=".5" y=".5" width="13" height="10" rx="1.4" fill="none" stroke="#9a9a9a" stroke-width="1"/><rect x="2.4" y="2.6" width="4.6" height="4" fill="none" stroke="#9a9a9a" stroke-width=".9"/><path d="M8.4 3H11.6M8.4 5H11.6M8.4 7H11.6M2.4 8.4H7" stroke="#9a9a9a" stroke-width=".9"/></svg>
<svg style="left:1847.8px;top:72.6px;" width="13.4" height="12" viewBox="0 0 13.4 12"><path d="M0 1.5H13.4M0 6H13.4M0 10.5H13.4" stroke="#6f89e8" stroke-width="1"/><circle cx="9.6" cy="1.5" r="1.5" fill="#6f89e8"/><circle cx="3.2" cy="6" r="1.5" fill="#6f89e8"/><circle cx="9.6" cy="10.5" r="1.5" fill="#6f89e8"/></svg>
<svg style="left:1877.5px;top:72px;" width="13" height="13" viewBox="0 0 13 13"><path d="M1 .8 V12.2 H12.2Z" fill="none" stroke="#9a9a9a" stroke-width="1" stroke-linejoin="round"/><path d="M3.6 6.4 V9.8 H7Z" fill="none" stroke="#9a9a9a" stroke-width=".9" stroke-linejoin="round"/><path d="M1 3.2h1.6M1 5.4h1.6M1 7.6h1.6M1 9.8h1.6" stroke="#9a9a9a" stroke-width=".8"/></svg>
<svg style="left:1908px;top:72px;" width="14" height="13" viewBox="0 0 14 13"><path d="M10.6 2.6 A5.6 5.6 0 1 0 10.6 10.4" fill="none" stroke="#9a9a9a" stroke-width="1.1"/><circle cx="6.4" cy="6.5" r="2" fill="#9a9a9a"/><path d="M8.4 6.5H13M11 4.4 L13.2 6.5 L11 8.6" fill="none" stroke="#9a9a9a" stroke-width="1"/></svg>
<div class="a" style="left:317px;top:242px;width:298px;height:18px;background:#d4d4d4;border-radius:5px;"></div>
<svg style="left:321.6px;top:137.1px;" width="8.4" height="4.8" viewBox="0 0 8.4 4.8"><path d="M.6 .5 L4.2 4.3 L7.800000000000001 .5" fill="none" stroke="#555" stroke-width="1.4" stroke-linecap="round" stroke-linejoin="round"/></svg>
<svg style="left:337px;top:133px;" width="12" height="12" viewBox="0 0 12 12"><rect x="0" y="0" width="12" height="12" rx="1.8" fill="#f0a51e"/><rect x="2.4" y="5" width="7.2" height="4.8" fill="none" stroke="#fff" stroke-width="1.2"/><path d="M1.4 1.6h1.8M4.2 1.6h1.8M7 1.6h1.8M9.6 1.6h1.2" stroke="#fbe3b4" stroke-width="1.1"/></svg>
<div class="t" style="left:354.6px;top:134.1px;font-size:11.5px;color:#2e2e2e;font-weight:700;letter-spacing:-0.075px;">View Controller Scene</div>
<svg style="left:594px;top:133.5px;" width="11" height="11" viewBox="0 0 11 11"><circle cx="5.5" cy="5.5" r="5.2" fill="#f2b01e"/><path d="M2.4 5.5H7.6M5.6 3 L8.2 5.5 L5.6 8" fill="none" stroke="#fff" stroke-width="1.5" stroke-linejoin="round"/></svg>
<svg style="left:337.7px;top:159.1px;" width="8.4" height="4.8" viewBox="0 0 8.4 4.8"><path d="M.6 .5 L4.2 4.3 L7.800000000000001 .5" fill="none" stroke="#555" stroke-width="1.4" stroke-linecap="round" stroke-linejoin="round"/></svg>
<svg style="left:352px;top:154px;" width="14" height="14" viewBox="0 0 14 14"><circle cx="7" cy="7" r="6.9" fill="#eea31f"/><rect x="3.8" y="3.8" width="6.4" height="6.4" rx="1.6" fill="#fff"/></svg>
<div class="t" style="left:370.4px;top:156.1px;font-size:11.5px;color:#2e2e2e;font-weight:400;letter-spacing:0.11px;">View Controller</div>
<svg style="left:353.6px;top:177.1px;" width="8.4" height="4.8" viewBox="0 0 8.4 4.8"><path d="M.6 .5 L4.2 4.3 L7.800000000000001 .5" fill="none" stroke="#555" stroke-width="1.4" stroke-linecap="round" stroke-linejoin="round"/></svg>
<svg style="left:368px;top:172px;" width="14" height="14" viewBox="0 0 14 14"><rect x="1" y="1" width="12" height="12" rx="1.8" fill="#fff" stroke="#3f4f5b" stroke-width="2"/></svg>
<div class="t" style="left:386.1px;top:174.1px;font-size:11.5px;color:#2e2e2e;font-weight:400;letter-spacing:0.061px;">View</div>
<svg style="left:386px;top:192px;" width="10" height="10" viewBox="0 0 10 10"><rect x=".5" y=".5" width="9" height="9" fill="#fff" stroke="#7d7d7d" stroke-width=".9"/><rect x="2.4" y="2.4" width="5.2" height="5.2" fill="none" stroke="#b5b5b5" stroke-width=".8"/></svg>
<div class="t" style="left:402.3px;top:192.1px;font-size:11.5px;color:#2e2e2e;font-weight:400;letter-spacing:-0.088px;">Safe Area</div>
<svg style="left:384px;top:208px;" width="14" height="14" viewBox="0 0 14 14"><rect x="0" y="0" width="14" height="14" rx="2" fill="#41515d"/><rect x="2.4" y="3.2" width="9.2" height="7.2" rx=".8" fill="#fff"/><path d="M3 9.8 L5.8 6.6 L7.8 8.6 L9 7.6 L11 9.8Z" fill="#41515d"/><circle cx="5" cy="5.4" r=".9" fill="#41515d"/></svg>
<div class="t" style="left:402.3px;top:210.1px;font-size:11.5px;color:#2e2e2e;font-weight:400;letter-spacing:0.21px;">bg</div>
<svg style="left:384px;top:226px;" width="14" height="14" viewBox="0 0 14 14"><rect x="0" y="0" width="14" height="14" rx="4.4" fill="#2f63e6"/></svg>
<div class="t" style="left:387.6px;top:228.2px;font-size:10px;color:#fff;font-weight:700;letter-spacing:0px;">B</div>
<div class="t" style="left:402.4px;top:228.1px;font-size:11.5px;color:#2e2e2e;font-weight:400;letter-spacing:0.091px;">Button</div>
<svg style="left:384px;top:244px;" width="14" height="14" viewBox="0 0 14 14"><rect x="0" y="0" width="14" height="14" rx="4.4" fill="#2f63e6"/></svg>
<div class="t" style="left:387.6px;top:246.2px;font-size:10px;color:#fff;font-weight:700;letter-spacing:0px;">B</div>
<div class="t" style="left:402.4px;top:246.1px;font-size:11.5px;color:#2e2e2e;font-weight:400;letter-spacing:0.091px;">Button</div>
<svg style="left:370.4px;top:267.1px;" width="8.4" height="4.8" viewBox="0 0 8.4 4.8"><path d="M.6 .5 L4.2 4.3 L7.800000000000001 .5" fill="none" stroke="#555" stroke-width="1.4" stroke-linecap="round" stroke-linejoin="round"/></svg>
<svg style="left:386px;top:264px;" width="10" height="10" viewBox="0 0 10 10"><rect x=".5" y=".5" width="9" height="9" fill="none" stroke="#2f63e6" stroke-width=".9" stroke-dasharray="1.2 1"/><rect x="2.8" y="2.8" width="4.4" height="4.4" fill="#fff" stroke="#2f63e6" stroke-width="1.2"/></svg>
<div class="t" style="left:402.3px;top:264.1px;font-size:11.5px;color:#2e2e2e;font-weight:400;letter-spacing:0.114px;">Constraints</div>
<svg style="left:401px;top:281px;" width="12" height="12" viewBox="0 0 12 12"><rect x="0" y="1" width="5" height="10" rx="1" fill="#2f63e6"/><path d="M6.6 6H11.4M6.8 4V8M11.4 4V8" stroke="#2f63e6" stroke-width="1.1"/></svg>
<div class="t" style="left:418.3px;top:282.1px;font-size:11.5px;color:#2e2e2e;font-weight:400;letter-spacing:0.212px;">bg.trailing = trailing</div>
<svg style="left:401px;top:299px;" width="12" height="12" viewBox="0 0 12 12"><rect x="7" y="1" width="5" height="10" rx="1" fill="#2f63e6"/><path d="M.6 6H5.4M.6 4V8M5.2 4V8" stroke="#2f63e6" stroke-width="1.1"/></svg>
<div class="t" style="left:418.3px;top:300.1px;font-size:11.5px;color:#2e2e2e;font-weight:400;letter-spacing:0.16px;">bg.leading = leading</div>
<svg style="left:401px;top:317px;" width="12" height="12" viewBox="0 0 12 12"><rect x="1" y="0" width="10" height="5.4" rx="1" fill="#2f63e6"/><path d="M6 6.6V11.2M4 6.8H8M4 11.2H8" stroke="#2f63e6" stroke-width="1.1"/></svg>
<div class="t" style="left:418.3px;top:318.1px;font-size:11.5px;color:#2e2e2e;font-weight:400;letter-spacing:0.341px;">bottom = bg.bottom</div>
<svg style="left:401px;top:335px;" width="12" height="12" viewBox="0 0 12 12"><rect x="1" y="6.6" width="10" height="5.4" rx="1" fill="#2f63e6"/><path d="M6 .8V5.4M4 .8H8M4 5.2H8" stroke="#2f63e6" stroke-width="1.1"/></svg>
<div class="t" style="left:418.3px;top:336.1px;font-size:11.5px;color:#2e2e2e;font-weight:400;letter-spacing:0.276px;">bg.top = top</div>
<svg style="left:401px;top:353px;" width="12" height="12" viewBox="0 0 12 12"><rect x="3" y="1.4" width="6" height="3.6" rx=".8" fill="#2f63e6"/><rect x="1" y="7" width="10" height="3.6" rx=".8" fill="#2f63e6"/><path d="M6 0V12" stroke="#2f63e6" stroke-width="1.2"/></svg>
<div class="t" style="left:418.3px;top:354.1px;font-size:11.5px;color:#2e2e2e;font-weight:400;letter-spacing:0.191px;">Button.centerX = centerX</div>
<svg style="left:401px;top:371px;" width="12" height="12" viewBox="0 0 12 12"><rect x="1.4" y="1" width="3.6" height="10" rx=".8" fill="#2f63e6"/><rect x="7" y="3" width="3.6" height="6" rx=".8" fill="#2f63e6"/><path d="M0 6H12" stroke="#2f63e6" stroke-width="1.2"/></svg>
<div class="t" style="left:418.3px;top:372.1px;font-size:11.5px;color:#2e2e2e;font-weight:400;letter-spacing:0.157px;">Button.centerY = centerY</div>
<svg style="left:352px;top:388px;" width="14" height="14" viewBox="0 0 14 14"><rect x="0" y="0" width="14" height="14" rx="3" fill="#f27f3a"/><path d="M5.6 4.6 L7.4 3.6 V10.6" fill="none" stroke="#fff" stroke-width="1.5"/></svg>
<div class="t" style="left:370px;top:390.1px;font-size:11.5px;color:#2e2e2e;font-weight:400;letter-spacing:0.057px;">First Responder</div>
<svg style="left:352px;top:406px;" width="14" height="14" viewBox="0 0 14 14"><rect x="0" y="0" width="14" height="14" rx="3" fill="#f27f3a"/><path d="M8.4 3.2H4.2 Q3.4 3.2 3.4 4V10 Q3.4 10.8 4.2 10.8H8.4" fill="none" stroke="#fff" stroke-width="1.2"/><path d="M6 7H11.4M9.4 4.8 L11.6 7 L9.4 9.2" fill="none" stroke="#fff" stroke-width="1.2"/></svg>
<div class="t" style="left:370px;top:408.1px;font-size:11.5px;color:#2e2e2e;font-weight:400;letter-spacing:-0.09px;">Exit</div>
<svg style="left:352px;top:424px;" width="14" height="14" viewBox="0 0 14 14"><circle cx="7" cy="7" r="7" fill="#44535f"/><path d="M3.4 7H10M7.6 4.4 L10.2 7 L7.6 9.6" fill="none" stroke="#cfd6dc" stroke-width="1.3" stroke-linejoin="round"/></svg>
<div class="t" style="left:370px;top:426.1px;font-size:11.5px;color:#2e2e2e;font-weight:400;letter-spacing:0.129px;">Storyboard Entry Point</div>
<div class="a" style="left:312px;top:828px;width:307px;height:22px;background:#fff;border-radius:6px;border:1px solid #d2d2d2;"></div>
<svg style="left:317px;top:832.5px;" width="13" height="13" viewBox="0 0 13 13"><circle cx="6.5" cy="6.5" r="5.9" fill="none" stroke="#3a3a3a" stroke-width="1.1"/><path d="M3.4 4.8H9.6M4.4 6.8H8.6M5.6 8.8H7.4" stroke="#3a3a3a" stroke-width="1.1"/></svg>
<div class="t" style="left:334px;top:833.9px;font-size:11.5px;color:#ababab;font-weight:400;letter-spacing:0.3px;">Filter</div>
<div class="a" style="left:1679px;top:121px;width:14px;height:687px;background:#f6f6f6;"></div>
<div class="a" style="left:1679px;top:121px;width:1px;height:687px;background:#e6e6e6;"></div>
<div class="a" style="left:1682px;top:262px;width:8px;height:231px;background:#808080;border-radius:4px;"></div>
<div class="a" style="left:870px;top:812px;width:672px;height:8px;background:#7c7c7c;border-radius:4px;"></div>
<div class="a" style="left:996px;top:292px;width:107px;height:24.5px;background:#fff;border-radius:4.5px;border:1px solid #d2d2d2;box-shadow:0 1px 2.5px rgba(0,0,0,.10);"></div>
<svg style="left:1040.5px;top:315.2px;" width="17" height="11" viewBox="0 0 17 11"><path d="M0 .4 Q2.6 .6 3.8 2.6 L7.6 9.4 Q8.5 10.6 9.4 9.4 L13.2 2.6 Q14.4 .6 17 .4" fill="#fff" stroke="#d2d2d2" stroke-width="1"/><rect x="1.2" y="-1" width="14.6" height="1.6" fill="#fff"/></svg>
<div class="t" style="left:1006.2px;top:299.1px;font-size:11.5px;color:#2a2a2a;font-weight:700;letter-spacing:0.119px;">View Controller</div>
<div class="a" style="left:973px;top:325px;width:184px;height:15px;background:#fff;border-radius:2px;border:1px solid #bdbdbd;"></div>
<svg style="left:1045px;top:329.3px;" width="7" height="7" viewBox="0 0 7 7"><circle cx="3.5" cy="3.5" r="2.6" fill="#fff" stroke="#f0a51e" stroke-width="1.7"/></svg>
<svg style="left:1061.9px;top:329.5px;" width="6.6" height="6.6" viewBox="0 0 6.6 6.6"><rect x="0" y="0" width="6.6" height="6.6" rx="1.3" fill="#f27f3a"/><rect x="2.9" y="1.6" width=".9" height="3.4" fill="#fbd0b4"/></svg>
<svg style="left:1079px;top:329.5px;" width="6.6" height="6.6" viewBox="0 0 6.6 6.6"><rect x="0" y="0" width="6.6" height="6.6" rx="1.3" fill="#f27f3a"/><path d="M4 1.8H2.2V4.8H4M3.2 3.3H5.2" fill="none" stroke="#fbd0b4" stroke-width=".7"/></svg>
<svg style="left:929px;top:535px;" width="45" height="13" viewBox="0 0 45 13"><path d="M0 6.5H43.5M36.5 .8 L43.8 6.5 L36.5 12.2" fill="none" stroke="#6e6e6e" stroke-width="1.1" stroke-linejoin="round" stroke-linecap="round"/></svg>
<svg style="left:974px;top:345px;" width="182" height="393" viewBox="0 0 182 393"><defs>
<clipPath id="ph"><rect x="0" y="0" width="182" height="393" rx="25" ry="25"/></clipPath>
<clipPath id="bl"><path d="M89.8 81.4 C97.6 80.8 105.6 81.9 113.0 83.5 C120.4 85.1 128.3 87.6 134.3 91.0 C140.3 94.4 145.6 98.5 149.0 104.0 C152.4 109.5 154.8 117.7 154.9 124.0 C155.0 130.3 153.2 136.0 149.5 142.0 C145.8 148.0 138.2 154.5 133.0 160.0 C127.8 165.5 122.2 170.6 118.0 175.0 C113.8 179.4 110.8 183.0 108.0 186.5 C105.2 190.0 103.2 192.9 101.5 196.0 C99.8 199.1 98.6 201.7 98.0 205.0 C97.4 208.3 97.4 212.5 97.8 216.0 C98.2 219.5 99.1 223.0 100.5 226.0 C101.9 229.0 103.8 231.1 106.0 234.0 C108.2 236.9 110.9 240.1 113.8 243.2 C116.7 246.3 119.4 249.6 123.4 252.8 C127.4 256.0 132.3 259.2 137.9 262.4 C143.5 265.6 151.5 269.6 157.2 272.1 C162.9 274.6 166.9 275.8 172.0 277.6 C177.1 279.4 183.3 280.9 188.0 283.0 C192.7 285.1 197.3 282.2 200.0 290.0 C202.7 297.8 204.0 311.7 204.0 330.0 C204.0 348.3 214.0 387.5 200.0 400.0 C186.0 412.5 141.0 405.0 120.0 405.0 C99.0 405.0 82.2 403.8 74.0 400.0 C65.8 396.2 72.3 389.3 71.0 382.0 C69.7 374.7 67.1 365.5 66.0 356.0 C64.9 346.5 64.5 335.2 64.2 325.0 C64.0 314.8 64.9 304.5 64.5 295.0 C64.1 285.5 63.9 275.8 62.0 268.0 C60.1 260.2 57.0 254.0 53.0 248.0 C49.0 242.0 43.5 237.5 38.0 232.0 C32.5 226.5 25.2 220.7 20.0 215.0 C14.8 209.3 9.9 203.8 7.0 198.0 C4.1 192.2 2.9 186.3 2.6 180.0 C2.3 173.7 3.1 167.0 5.0 160.0 C6.9 153.0 10.2 145.2 14.0 138.0 C17.8 130.8 22.8 123.3 28.0 117.0 C33.2 110.7 38.7 105.0 45.0 100.0 C51.3 95.0 58.5 90.1 66.0 87.0 C73.5 83.9 82.0 82.0 89.8 81.4Z"/></clipPath>
<filter id="b4" filterUnits="userSpaceOnUse" x="-60" y="-20" width="320" height="460"><feGaussianBlur stdDeviation="4"/></filter>
<filter id="b7" filterUnits="userSpaceOnUse" x="-60" y="-20" width="320" height="460"><feGaussianBlur stdDeviation="7"/></filter>
<filter id="b11" filterUnits="userSpaceOnUse" x="-60" y="-20" width="320" height="460"><feGaussianBlur stdDeviation="11"/></filter>
<filter id="b16" filterUnits="userSpaceOnUse" x="-60" y="-20" width="320" height="460"><feGaussianBlur stdDeviation="16"/></filter>
<filter id="be" filterUnits="userSpaceOnUse" x="-10" y="-10" width="210" height="420"><feGaussianBlur stdDeviation="0.5"/></filter>
<linearGradient id="bg0" x1="0" y1="80" x2="0" y2="393" gradientUnits="userSpaceOnUse"><stop offset="0" stop-color="#7a00ff"/><stop offset=".35" stop-color="#5000ec"/><stop offset=".5" stop-color="#3000d6"/><stop offset=".72" stop-color="#2000cc"/><stop offset="1" stop-color="#1600e0"/></linearGradient>
</defs>
<g clip-path="url(#ph)">
<rect x="0" y="0" width="182" height="393" fill="#000"/>
<g filter="url(#be)"><g clip-path="url(#bl)">
<rect x="-10" y="60" width="220" height="350" fill="url(#bg0)"/>
<ellipse cx="22" cy="185" rx="30" ry="60" fill="#6600ff" filter="url(#b11)"/>
<ellipse cx="42" cy="166" rx="30" ry="44" fill="#cc10c4" filter="url(#b11)" transform="rotate(-35 42 166)"/>
<ellipse cx="66" cy="150" rx="26" ry="26" fill="#e6267a" filter="url(#b11)"/>
<ellipse cx="74" cy="124" rx="32" ry="24" fill="#f4484a" filter="url(#b11)" transform="rotate(-25 74 124)"/>
<ellipse cx="104" cy="114" rx="50" ry="31" fill="#fc560e" filter="url(#b7)" transform="rotate(-12 104 114)"/>
<ellipse cx="112" cy="112" rx="38" ry="26" fill="#fc560e" filter="url(#b4)" transform="rotate(-10 112 112)"/>
<ellipse cx="135" cy="144" rx="13" ry="27" fill="#fc560e" filter="url(#b4)" transform="rotate(28 135 144)"/>
<ellipse cx="113" cy="149" rx="11" ry="17" fill="#8e3016" filter="url(#b7)" transform="rotate(32 113 149)"/>
<ellipse cx="104" cy="166" rx="13" ry="14" fill="#5a1236" filter="url(#b7)"/>
<ellipse cx="99" cy="183" rx="13" ry="10" fill="#26003e" filter="url(#b7)"/>
<ellipse cx="70" cy="178" rx="14" ry="14" fill="#7a0cc0" filter="url(#b11)"/>
<path d="M152 100 Q162 125 150 150" fill="none" stroke="#5a10ff" stroke-width="4" filter="url(#b4)"/>
<ellipse cx="112" cy="262" rx="12" ry="26" fill="#5c08d8" filter="url(#b11)" transform="rotate(-30 112 262)"/>
<path d="M98 226 Q95 250 95 275 Q95 300 98 325" fill="none" stroke="#33005a" stroke-width="7" filter="url(#b4)" opacity=".75"/><path d="M98 228 Q96 245 95.5 262" fill="none" stroke="#5a0030" stroke-width="5" filter="url(#b4)"/>
<path d="M112 246 Q135 268 190 288" fill="none" stroke="#6a14ff" stroke-width="12" filter="url(#b7)"/>
<ellipse cx="150" cy="340" rx="45" ry="60" fill="#1800f0" filter="url(#b16)"/>
<ellipse cx="92" cy="378" rx="22" ry="34" fill="#0a4cff" filter="url(#b16)"/><ellipse cx="92" cy="384" rx="12" ry="18" fill="#0a50ff" filter="url(#b11)"/>
<ellipse cx="72" cy="300" rx="9" ry="50" fill="#2400d8" filter="url(#b7)"/>
</g></g>
<rect x="74.5" y="387.6" width="47" height="1.8" rx=".9" fill="#0a0a1e"/>
</g></svg>
<div class="a" style="left:1048px;top:533.4px;width:34px;height:16px;background:#1877fa;border-radius:2.6px;"></div>
<div class="t" style="left:765px;width:600px;text-align:center;top:537.8px;font-size:7.6px;color:#dbe8ff;font-weight:400;letter-spacing:0.25px;">Button</div>
<div class="a" style="left:1048px;top:561px;width:34px;height:15.4px;background:#1877fa;border-radius:2.6px;"></div>
<div class="t" style="left:765px;width:600px;text-align:center;top:565.2px;font-size:7.6px;color:#dbe8ff;font-weight:400;letter-spacing:0.25px;">Button</div>
<div class="a" style="left:1045.2px;top:558.4px;width:5px;height:5px;background:#dcd6f0;border-radius:.6px;box-shadow:0 0 0 .9px rgba(20,10,60,.5);"></div>
<div class="a" style="left:1045.2px;top:566.1px;width:5px;height:5px;background:#dcd6f0;border-radius:.6px;box-shadow:0 0 0 .9px rgba(20,10,60,.5);"></div>
<div class="a" style="left:1045.2px;top:573.6px;width:5px;height:5px;background:#dcd6f0;border-radius:.6px;box-shadow:0 0 0 .9px rgba(20,10,60,.5);"></div>
<div class="a" style="left:1061.4px;top:558.4px;width:5px;height:5px;background:#dcd6f0;border-radius:.6px;box-shadow:0 0 0 .9px rgba(20,10,60,.5);"></div>
<div class="a" style="left:1061.4px;top:573.6px;width:5px;height:5px;background:#dcd6f0;border-radius:.6px;box-shadow:0 0 0 .9px rgba(20,10,60,.5);"></div>
<div class="a" style="left:1079.2px;top:558.4px;width:5px;height:5px;background:#dcd6f0;border-radius:.6px;box-shadow:0 0 0 .9px rgba(20,10,60,.5);"></div>
<div class="a" style="left:1079.2px;top:566.1px;width:5px;height:5px;background:#dcd6f0;border-radius:.6px;box-shadow:0 0 0 .9px rgba(20,10,60,.5);"></div>
<div class="a" style="left:1079.2px;top:573.6px;width:5px;height:5px;background:#dcd6f0;border-radius:.6px;box-shadow:0 0 0 .9px rgba(20,10,60,.5);"></div>
<svg style="left:635px;top:831px;" width="13" height="12.6" viewBox="0 0 13 12.6"><rect x=".6" y=".6" width="11.6" height="11.4" rx="1.8" fill="none" stroke="#5e5e5e" stroke-width="1.1"/><rect x="2.3" y="2.4" width="2.4" height="7.8" rx=".6" fill="#5e5e5e"/></svg>
<svg style="left:658px;top:830px;" width="14" height="14" viewBox="0 0 14 14"><circle cx="7" cy="7" r="6.4" fill="none" stroke="#5e5e5e" stroke-width="1.1"/><circle cx="7" cy="3.9" r="1.1" fill="#5e5e5e"/><path d="M3.6 5.8 L7 6.4 L10.4 5.8" fill="none" stroke="#5e5e5e" stroke-width="1.1" stroke-linecap="round"/><path d="M7 6.4 V8.4 L5.4 11.4 M7 8.4 L8.6 11.4" fill="none" stroke="#5e5e5e" stroke-width="1.1" stroke-linecap="round"/></svg>
<svg style="left:683.7px;top:829.8px;" width="14.6" height="14.6" viewBox="0 0 14.6 14.6"><circle cx="7.3" cy="7.3" r="6.4" fill="#fff" stroke="#1455e2" stroke-width="1.3"/><path d="M7.3 .8 A6.5 6.5 0 0 0 7.3 13.8 Z" fill="#1455e2"/><path d="M7.3 4.2 A3.1 3.1 0 0 0 7.3 10.4Z" fill="#fff"/><path d="M7.3 4.2 A3.1 3.1 0 0 1 7.3 10.4Z" fill="#1455e2"/></svg>
<svg style="left:710.5px;top:827.5px;" width="15" height="16.5" viewBox="0 0 15 16.5"><rect x=".6" y="6.2" width="9.6" height="9.6" rx="1.2" fill="none" stroke="#5e5e5e" stroke-width="1.1"/><path d="M8.6 2.2 Q13.6 2 13.8 7" fill="none" stroke="#5e5e5e" stroke-width="1.1"/><path d="M10.4 .4 L8.4 2.2 L10.4 4" fill="none" stroke="#5e5e5e" stroke-width="1.1" stroke-linejoin="round" stroke-linecap="round"/></svg>
<svg style="left:735px;top:830.8px;" width="13" height="12.5" viewBox="0 0 13 12.5"><rect x=".6" y=".6" width="11.8" height="11.3" rx="1.6" fill="none" stroke="#d2d2d2" stroke-width="1.1"/><path d="M6.5 .6V12" stroke="#d2d2d2" stroke-width="1.1"/></svg>
<svg style="left:763.8px;top:829.8px;" width="8.8" height="13.2" viewBox="0 0 8.8 13.2"><rect x=".6" y=".6" width="7.6" height="12" rx="1.6" fill="none" stroke="#5e5e5e" stroke-width="1.1"/><path d="M3 1.9H5.8" stroke="#5e5e5e" stroke-width="1"/></svg>
<div class="t" style="left:787.2px;top:831.2px;font-size:11.5px;color:#4c4c4c;font-weight:400;letter-spacing:-0.148px;">iPhone 15 Pro</div>
<svg style="left:1118.6px;top:830px;" width="14.5" height="14.5" viewBox="0 0 14.5 14.5"><circle cx="5.6" cy="5.6" r="4.9" fill="none" stroke="#5e5e5e" stroke-width="1.1"/><path d="M9.2 9.2 L13.6 13.6" stroke="#5e5e5e" stroke-width="1.3" stroke-linecap="round"/><path d="M3.4 5.6H7.8" stroke="#5e5e5e" stroke-width="1"/></svg>
<div class="t" style="left:1148.2px;top:831.2px;font-size:11.5px;color:#4c4c4c;font-weight:400;letter-spacing:0.592px;">46%</div>
<svg style="left:1185.4px;top:830px;" width="14.5" height="14.5" viewBox="0 0 14.5 14.5"><circle cx="5.6" cy="5.6" r="4.9" fill="none" stroke="#5e5e5e" stroke-width="1.1"/><path d="M9.2 9.2 L13.6 13.6" stroke="#5e5e5e" stroke-width="1.3" stroke-linecap="round"/><path d="M3.4 5.6H7.8" stroke="#5e5e5e" stroke-width="1"/><path d="M5.6 3.4V7.8" stroke="#5e5e5e" stroke-width="1"/></svg>
<svg style="left:1561px;top:830px;" width="15.2" height="14.8" viewBox="0 0 15.2 14.8"><g fill="none" stroke="#c6c6c6" stroke-width="1"><path d="M.5 3.6V.5H3.6M11.6 .5H14.7V3.6M14.7 11.2V14.3H11.6M3.6 14.3H.5V11.2"/><path d="M4.4 9.4 A4 4 0 1 1 7.8 11.3"/><path d="M6.2 8.2 L4.3 9.7 L5.6 11.8"/></g></svg>
<svg style="left:1586.8px;top:830px;" width="15.6" height="15" viewBox="0 0 15.6 15"><path d="M.7 0V15" stroke="#686868" stroke-width="1.3"/><rect x="3.2" y="2.5" width="8.8" height="4.4" fill="none" stroke="#686868" stroke-width="1.2"/><rect x="3.2" y="8.5" width="12" height="4.2" fill="none" stroke="#686868" stroke-width="1.2"/></svg>
<svg style="left:1613px;top:829.8px;" width="15.2" height="15.2" viewBox="0 0 15.2 15.2"><g fill="none" stroke="#686868" stroke-width="1.15"><rect x="4.3" y="4.5" width="6.4" height="6.4"/><path d="M.5 5.7V9.7M.5 7.7H2.8M14.7 5.7V9.7M14.7 7.7H12.3M5.6 .5H9.4M7.5 .5V3M5.6 14.7H9.4M7.5 14.7V12.3"/></g></svg>
<svg style="left:1639px;top:832px;" width="15.4" height="11" viewBox="0 0 15.4 11"><g fill="none" stroke="#686868" stroke-width="1.15"><path d="M7.6 1.2 L12.2 9.5 H3Z" stroke-linejoin="round"/><path d="M.5 3.5V8M.5 5.7H2.6M14.9 3.5V8M14.9 5.7H12.7"/></g><circle cx="7.6" cy="6.4" r="1.15" fill="#686868"/></svg>
<svg style="left:1667.2px;top:830.4px;" width="15" height="14.4" viewBox="0 0 15 14.4"><g fill="none" stroke="#686868" stroke-width="1.2"><path d="M5.2 1.8H.6V13.8H14.4V1.8H9.8"/><path d="M7.4 0V9.8M3.4 6.2 L7.4 10.2 L11.4 6.2"/></g></svg>
<svg style="left:319px;top:862px;" width="15" height="9.5" viewBox="0 0 15 9.5"><path d="M1.6 0H10.4Q11.4 0 12 .8L14.4 4.2Q14.8 4.75 14.4 5.3L12 8.7Q11.4 9.5 10.4 9.5H1.6Q0 9.5 0 7.9V1.6Q0 0 1.6 0Z" fill="#7da0ee"/></svg>
<svg style="left:1668px;top:860.4px;" width="13" height="12.4" viewBox="0 0 13 12.4"><rect x=".5" y=".5" width="12" height="11.4" rx="2.6" fill="none" stroke="#c2c2c2" stroke-width="1"/><rect x="2.3" y="7.6" width="8.4" height="2.6" rx="1.2" fill="#b6b6b6"/></svg>
<div class="t" style="left:315px;top:976.2px;font-size:11.5px;color:#2c2c2c;font-weight:400;letter-spacing:0.2px;">Auto</div>
<svg style="left:342.5px;top:977px;" width="6" height="10" viewBox="0 0 6 10"><path d="M.8 3.6 L3 1.2 L5.2 3.6M.8 6.4 L3 8.8 L5.2 6.4" fill="none" stroke="#2c2c2c" stroke-width="1.2" stroke-linecap="round" stroke-linejoin="round"/></svg>
<div class="a" style="left:362px;top:975px;width:1px;height:14px;background:#dcdcdc;"></div>
<svg style="left:372.5px;top:977px;" width="15" height="10" viewBox="0 0 15 10"><path d="M.6 5 Q7.5 -2.6 14.4 5 Q7.5 12.6 .6 5Z" fill="none" stroke="#d6d6d6" stroke-width="1"/><circle cx="7.5" cy="5" r="2.6" fill="none" stroke="#d6d6d6" stroke-width="1"/><circle cx="7.5" cy="5" r="1" fill="#d6d6d6"/></svg>
<svg style="left:400px;top:975.5px;" width="13" height="13" viewBox="0 0 13 13"><circle cx="6.5" cy="6.5" r="5.9" fill="none" stroke="#d6d6d6" stroke-width="1"/><path d="M5.6 5.6H6.7V9.6M5.4 9.6H8" fill="none" stroke="#d6d6d6" stroke-width="1"/><circle cx="6.5" cy="3.6" r=".7" fill="#d6d6d6"/></svg>
<div class="a" style="left:606px;top:971px;width:173px;height:22px;background:#fff;border-radius:6px;border:1px solid #d2d2d2;"></div>
<svg style="left:611px;top:975.5px;" width="13" height="13" viewBox="0 0 13 13"><circle cx="6.5" cy="6.5" r="5.9" fill="none" stroke="#3a3a3a" stroke-width="1.1"/><path d="M3.4 4.8H9.6M4.4 6.8H8.6M5.6 8.8H7.4" stroke="#3a3a3a" stroke-width="1.1"/></svg>
<div class="t" style="left:628px;top:976.9px;font-size:11.5px;color:#ababab;font-weight:400;letter-spacing:0.3px;">Filter</div>
<div class="t" style="left:792.2px;top:887.8px;font-size:17.6px;color:#000;font-weight:400;letter-spacing:0px;">2</div>
<div class="t" style="left:792.2px;top:912.0px;font-size:17.6px;color:#000;font-weight:400;letter-spacing:0px;">2</div>
<div class="a" style="left:1679px;top:881px;width:14px;height:88px;background:#f6f6f6;"></div>
<div class="a" style="left:1679px;top:881px;width:1px;height:88px;background:#e6e6e6;"></div>
<svg style="left:793px;top:977.5px;" width="15" height="10" viewBox="0 0 15 10"><path d="M.6 5 Q7.5 -2.6 14.4 5 Q7.5 12.6 .6 5Z" fill="none" stroke="#d6d6d6" stroke-width="1"/><circle cx="7.5" cy="5" r="2.6" fill="none" stroke="#d6d6d6" stroke-width="1"/><circle cx="7.5" cy="5" r="1" fill="#d6d6d6"/></svg>
<svg style="left:817.6px;top:976px;" width="11.4" height="13.2" viewBox="0 0 11.4 13.2"><rect x="0" y="0" width="11.4" height="6" rx="3" fill="#6e97ee"/><rect x="0" y="7.2" width="11.4" height="6" rx="3" fill="#6e97ee"/><circle cx="3.2" cy="3" r="1.7" fill="#fff"/><circle cx="8.2" cy="10.2" r="1.7" fill="#fff"/></svg>
<div class="a" style="left:1359px;top:971px;width:249px;height:22px;background:#fff;border-radius:6px;border:1px solid #d2d2d2;"></div>
<svg style="left:1362.6px;top:975.8px;" width="26.4" height="12.6" viewBox="0 0 26.4 12.6"><rect x=".6" y=".6" width="25.2" height="11.4" rx="5.7" fill="none" stroke="#6e6e6e" stroke-width="1.1"/><path d="M4.6 4.2H12.6M6 6.4H11.2M7.4 8.6H9.8" stroke="#6e6e6e" stroke-width="1"/><path d="M17 5.2 L19.4 7.6 L21.8 5.2" fill="none" stroke="#6e6e6e" stroke-width="1.2"/></svg>
<div class="t" style="left:1393px;top:976.9px;font-size:11.5px;color:#ababab;font-weight:400;letter-spacing:0.3px;">Filter</div>
<svg style="left:1619px;top:975.5px;" width="11" height="13" viewBox="0 0 11 13"><g fill="none" stroke="#c2c2c2" stroke-width="1"><path d="M.4 2.6H10.6M3.6 2.4V.8H7.4V2.4M1.6 2.8 L2.4 12.4H8.6L9.4 2.8M4 4.6V10.6M5.5 4.6V10.6M7 4.6V10.6"/></g></svg>
<div class="a" style="left:1640px;top:975px;width:1px;height:14px;background:#e2e2e2;"></div>
<svg style="left:1650px;top:975px;" width="13" height="13" viewBox="0 0 13 13"><rect x=".7" y=".7" width="11.6" height="11.6" rx="2" fill="none" stroke="#7397ee" stroke-width="1.1"/><rect x="2.4" y="2.6" width="2.4" height="7.8" rx=".8" fill="#7397ee"/></svg>
<svg style="left:1671px;top:975px;" width="13" height="13" viewBox="0 0 13 13"><rect x=".7" y=".7" width="11.6" height="11.6" rx="2" fill="none" stroke="#7397ee" stroke-width="1.1"/><rect x="8.2" y="2.6" width="2.4" height="7.8" rx=".8" fill="#7397ee"/></svg>
<div class="t" style="left:1701.6px;top:98.8px;font-size:12.5px;color:#5c5c5c;font-weight:700;letter-spacing:-0.111px;">Button</div>
<div class="t" style="right:214.29999999999995px;top:126.4px;font-size:11px;color:#2e2e2e;font-weight:400;letter-spacing:0.0px;">Type</div>
<div class="a" style="left:1779px;top:122.5px;width:153px;height:17px;background:#fff;border-radius:4.5px;box-shadow:0 0 0 .5px rgba(0,0,0,.14),0 1px 1.5px rgba(0,0,0,.22);"></div>
<div class="t" style="left:1785.5px;top:126.2px;font-size:11.5px;color:#262626;font-weight:400;letter-spacing:0.08px;">System</div>
<svg style="left:1920.5px;top:126px;" width="6" height="10" viewBox="0 0 6 10"><path d="M.8 3.6 L3 1.3 L5.2 3.6M.8 6.4 L3 8.7 L5.2 6.4" fill="none" stroke="#333" stroke-width="1.25" stroke-linecap="round" stroke-linejoin="round"/></svg>
<div class="a" style="left:1702px;top:144px;width:230px;height:1px;background:#dddddd;"></div>
<div class="t" style="right:214.29999999999995px;top:155.4px;font-size:11px;color:#2e2e2e;font-weight:400;letter-spacing:0.0px;">Style</div>
<div class="a" style="left:1779px;top:151.5px;width:153px;height:17px;background:#fff;border-radius:4.5px;box-shadow:0 0 0 .5px rgba(0,0,0,.14),0 1px 1.5px rgba(0,0,0,.22);"></div>
<div class="t" style="left:1785.5px;top:155.2px;font-size:11.5px;color:#262626;font-weight:400;letter-spacing:0.08px;">Filled</div>
<svg style="left:1920.5px;top:155px;" width="6" height="10" viewBox="0 0 6 10"><path d="M.8 3.6 L3 1.3 L5.2 3.6M.8 6.4 L3 8.7 L5.2 6.4" fill="none" stroke="#333" stroke-width="1.25" stroke-linecap="round" stroke-linejoin="round"/></svg>
<div class="t" style="right:214.29999999999995px;top:177.4px;font-size:11px;color:#2e2e2e;font-weight:400;letter-spacing:0.0px;">Title</div>
<div class="a" style="left:1779px;top:173.5px;width:153px;height:17px;background:#fff;border-radius:4.5px;box-shadow:0 0 0 .5px rgba(0,0,0,.14),0 1px 1.5px rgba(0,0,0,.22);"></div>
<div class="t" style="left:1785.5px;top:177.2px;font-size:11.5px;color:#262626;font-weight:400;letter-spacing:0.08px;">Plain</div>
<svg style="left:1920.5px;top:177px;" width="6" height="10" viewBox="0 0 6 10"><path d="M.8 3.6 L3 1.3 L5.2 3.6M.8 6.4 L3 8.7 L5.2 6.4" fill="none" stroke="#333" stroke-width="1.25" stroke-linecap="round" stroke-linejoin="round"/></svg>
<div class="a" style="left:1779px;top:194.8px;width:153px;height:17px;background:#fff;border:1px solid #d4d4d4;border-bottom-color:#bdbdbd;"></div>
<div class="t" style="left:1783px;top:198.5px;font-size:11.5px;color:#262626;font-weight:400;letter-spacing:0.08px;">Button</div>
<div class="a" style="left:1779px;top:217.8px;width:137px;height:17px;background:#fff;border:1px solid #d4d4d4;border-bottom-color:#bdbdbd;"></div>
<div class="t" style="left:1783px;top:221.5px;font-size:11.5px;color:#bcbcbc;font-weight:400;letter-spacing:0.08px;">No Font</div>
<svg style="left:1901.5px;top:220px;" width="13" height="12" viewBox="0 0 13 12"><rect x=".5" y=".5" width="12" height="11" rx="1" fill="#fff" stroke="#6a6a6a" stroke-width=".9"/><path d="M.5 2.4H12.5" stroke="#6a6a6a" stroke-width=".9"/><path d="M3.6 4.4H9.4V5.6M6.5 4.4V10M5.2 10H7.8M3.6 4.4V5.6" fill="none" stroke="#333" stroke-width="1.1"/></svg>
<div class="a" style="left:1919.5px;top:218px;width:12px;height:17px;background:#fff;border-radius:4px;box-shadow:0 0 0 .5px rgba(0,0,0,.18),0 1px 1.5px rgba(0,0,0,.2);"></div>
<svg style="left:1922.5px;top:221px;" width="6" height="11" viewBox="0 0 6 11"><path d="M.8 3.8 L3 1.4 L5.2 3.8M.8 7.2 L3 9.6 L5.2 7.2" fill="none" stroke="#333" stroke-width="1.2" stroke-linecap="round" stroke-linejoin="round"/></svg>
<div class="t" style="right:214.29999999999995px;top:247.4px;font-size:11px;color:#2e2e2e;font-weight:400;letter-spacing:0.0px;">Subtitle</div>
<div class="a" style="left:1779px;top:243.5px;width:153px;height:17px;background:#fff;border-radius:4.5px;box-shadow:0 0 0 .5px rgba(0,0,0,.14),0 1px 1.5px rgba(0,0,0,.22);"></div>
<div class="t" style="left:1785.5px;top:247.2px;font-size:11.5px;color:#262626;font-weight:400;letter-spacing:0.08px;">Plain</div>
<svg style="left:1920.5px;top:247px;" width="6" height="10" viewBox="0 0 6 10"><path d="M.8 3.6 L3 1.3 L5.2 3.6M.8 6.4 L3 8.7 L5.2 6.4" fill="none" stroke="#333" stroke-width="1.25" stroke-linecap="round" stroke-linejoin="round"/></svg>
<div class="a" style="left:1779px;top:264.3px;width:153px;height:17px;background:#fff;border:1px solid #d4d4d4;border-bottom-color:#bdbdbd;"></div>
<div class="t" style="left:1783px;top:267.9px;font-size:11.5px;color:#bcbcbc;font-weight:400;letter-spacing:0.08px;">Subtitle</div>
<div class="t" style="right:214.29999999999995px;top:291.4px;font-size:11px;color:#2e2e2e;font-weight:400;letter-spacing:0.0px;">Alignment</div>
<div class="a" style="left:1779px;top:287.5px;width:153px;height:17px;background:#fff;border-radius:4.5px;box-shadow:0 0 0 .5px rgba(0,0,0,.14),0 1px 1.5px rgba(0,0,0,.22);"></div>
<div class="t" style="left:1785.5px;top:291.1px;font-size:11.5px;color:#262626;font-weight:400;letter-spacing:0.08px;">Default</div>
<svg style="left:1920.5px;top:291px;" width="6" height="10" viewBox="0 0 6 10"><path d="M.8 3.6 L3 1.3 L5.2 3.6M.8 6.4 L3 8.7 L5.2 6.4" fill="none" stroke="#333" stroke-width="1.25" stroke-linecap="round" stroke-linejoin="round"/></svg>
<div class="t" style="right:214.29999999999995px;top:312.4px;font-size:11px;color:#2e2e2e;font-weight:400;letter-spacing:0.0px;">Foreground</div>
<div class="a" style="left:1779px;top:308.5px;width:153px;height:17px;background:#fff;border-radius:4.5px;box-shadow:0 0 0 .5px rgba(0,0,0,.14),0 1px 1.5px rgba(0,0,0,.22);"></div>
<div class="t" style="left:1817.5px;top:312.1px;font-size:11.5px;color:#262626;font-weight:400;letter-spacing:0.08px;">Default</div>
<svg style="left:1920.5px;top:312px;" width="6" height="10" viewBox="0 0 6 10"><path d="M.8 3.6 L3 1.3 L5.2 3.6M.8 6.4 L3 8.7 L5.2 6.4" fill="none" stroke="#333" stroke-width="1.25" stroke-linecap="round" stroke-linejoin="round"/></svg>
<svg style="left:1786px;top:311.5px;" width="29" height="11" viewBox="0 0 29 11"><rect x="0" y="0" width="29" height="11" fill="#fff" stroke="#e4e4e4" stroke-width=".6"/><path d="M.5 9.6 L28.5 1.4" stroke="#e0443e" stroke-width="1"/></svg>
<div class="t" style="right:214.29999999999995px;top:334.4px;font-size:11px;color:#2e2e2e;font-weight:400;letter-spacing:0.0px;">Background</div>
<div class="a" style="left:1779px;top:330.5px;width:153px;height:17px;background:#fff;border-radius:4.5px;box-shadow:0 0 0 .5px rgba(0,0,0,.14),0 1px 1.5px rgba(0,0,0,.22);"></div>
<div class="t" style="left:1817.5px;top:334.1px;font-size:11.5px;color:#262626;font-weight:400;letter-spacing:0.08px;">Default</div>
<svg style="left:1920.5px;top:334px;" width="6" height="10" viewBox="0 0 6 10"><path d="M.8 3.6 L3 1.3 L5.2 3.6M.8 6.4 L3 8.7 L5.2 6.4" fill="none" stroke="#333" stroke-width="1.25" stroke-linecap="round" stroke-linejoin="round"/></svg>
<svg style="left:1786px;top:333.5px;" width="29" height="11" viewBox="0 0 29 11"><rect x="0" y="0" width="29" height="11" fill="#fff" stroke="#e4e4e4" stroke-width=".6"/><path d="M.5 9.6 L28.5 1.4" stroke="#e0443e" stroke-width="1"/></svg>
<div class="t" style="right:214.29999999999995px;top:358.4px;font-size:11px;color:#2e2e2e;font-weight:400;letter-spacing:0.0px;">Image</div>
<div class="a" style="left:1779px;top:355px;width:153px;height:17px;background:#fff;border-radius:4.5px;box-shadow:0 0 0 .5px rgba(0,0,0,.14),0 1px 1.5px rgba(0,0,0,.18);"></div>
<div class="t" style="left:1787px;top:358.2px;font-size:11.5px;color:#bcbcbc;font-weight:400;letter-spacing:0.08px;">Image</div>
<div class="a" style="left:1919px;top:356.5px;width:12px;height:14px;background:#fff;border-radius:4px;box-shadow:0 0 0 .5px rgba(0,0,0,.2),0 .5px 1px rgba(0,0,0,.2);"></div>
<svg style="left:1922px;top:361.5px;" width="6" height="4" viewBox="0 0 6 4"><path d="M.7 .7 L3 3 L5.3 .7" fill="none" stroke="#333" stroke-width="1.2" stroke-linecap="round" stroke-linejoin="round"/></svg>
<div class="t" style="left:1708px;top:381.5px;font-size:11px;color:#2e2e2e;font-weight:700;letter-spacing:-0.362px;">Background Configuration</div>
<div class="t" style="right:214.29999999999995px;top:401.9px;font-size:11px;color:#2e2e2e;font-weight:400;letter-spacing:0.0px;">Background</div>
<div class="a" style="left:1779px;top:398.0px;width:153px;height:17px;background:#fff;border-radius:4.5px;box-shadow:0 0 0 .5px rgba(0,0,0,.14),0 1px 1.5px rgba(0,0,0,.22);"></div>
<div class="t" style="left:1785.5px;top:401.6px;font-size:11.5px;color:#262626;font-weight:400;letter-spacing:0.08px;">Default</div>
<svg style="left:1920.5px;top:401.5px;" width="6" height="10" viewBox="0 0 6 10"><path d="M.8 3.6 L3 1.3 L5.2 3.6M.8 6.4 L3 8.7 L5.2 6.4" fill="none" stroke="#333" stroke-width="1.25" stroke-linecap="round" stroke-linejoin="round"/></svg>
<div class="t" style="right:214.29999999999995px;top:423.4px;font-size:11px;color:#2e2e2e;font-weight:400;letter-spacing:0.0px;">Corner Style</div>
<div class="a" style="left:1779px;top:419.5px;width:153px;height:17px;background:#fff;border-radius:4.5px;box-shadow:0 0 0 .5px rgba(0,0,0,.14),0 1px 1.5px rgba(0,0,0,.22);"></div>
<div class="t" style="left:1785.5px;top:423.1px;font-size:11.5px;color:#262626;font-weight:400;letter-spacing:0.08px;">Default</div>
<svg style="left:1920.5px;top:423px;" width="6" height="10" viewBox="0 0 6 10"><path d="M.8 3.6 L3 1.3 L5.2 3.6M.8 6.4 L3 8.7 L5.2 6.4" fill="none" stroke="#333" stroke-width="1.25" stroke-linecap="round" stroke-linejoin="round"/></svg>
<div class="t" style="right:214.29999999999995px;top:447.4px;font-size:11px;color:#2e2e2e;font-weight:400;letter-spacing:0.0px;">Content Insets</div>
<div class="a" style="left:1779px;top:443.5px;width:153px;height:17px;background:#fff;border-radius:4.5px;box-shadow:0 0 0 .5px rgba(0,0,0,.14),0 1px 1.5px rgba(0,0,0,.22);"></div>
<div class="t" style="left:1785.5px;top:447.1px;font-size:11.5px;color:#262626;font-weight:400;letter-spacing:0.08px;">Default</div>
<svg style="left:1920.5px;top:447px;" width="6" height="10" viewBox="0 0 6 10"><path d="M.8 3.6 L3 1.3 L5.2 3.6M.8 6.4 L3 8.7 L5.2 6.4" fill="none" stroke="#333" stroke-width="1.25" stroke-linecap="round" stroke-linejoin="round"/></svg>
<div class="t" style="right:214.29999999999995px;top:467.7px;font-size:11px;color:#2e2e2e;font-weight:400;letter-spacing:0.0px;">Drawing</div>
<div class="a" style="left:1779.8px;top:466.7px;width:11.2px;height:11.2px;background:#fff;border-radius:2.6px;box-shadow:0 0 0 .5px rgba(0,0,0,.25),0 .5px 1px rgba(0,0,0,.25);"></div>
<div class="t" style="left:1795.0px;top:467.4px;font-size:11.5px;color:#262626;font-weight:400;letter-spacing:0.08px;">Shows Activity Indicator</div>
<div class="a" style="left:1702px;top:484px;width:230px;height:1px;background:#dddddd;"></div>
<div class="t" style="right:214.29999999999995px;top:493.4px;font-size:11px;color:#2e2e2e;font-weight:400;letter-spacing:0.0px;">Role</div>
<div class="a" style="left:1779px;top:489.5px;width:153px;height:17px;background:#fff;border-radius:4.5px;box-shadow:0 0 0 .5px rgba(0,0,0,.14),0 1px 1.5px rgba(0,0,0,.22);"></div>
<div class="t" style="left:1785.5px;top:493.1px;font-size:11.5px;color:#262626;font-weight:400;letter-spacing:0.08px;">Normal</div>
<svg style="left:1920.5px;top:493px;" width="6" height="10" viewBox="0 0 6 10"><path d="M.8 3.6 L3 1.3 L5.2 3.6M.8 6.4 L3 8.7 L5.2 6.4" fill="none" stroke="#333" stroke-width="1.25" stroke-linecap="round" stroke-linejoin="round"/></svg>
<div class="t" style="right:214.29999999999995px;top:513.4px;font-size:11px;color:#2e2e2e;font-weight:400;letter-spacing:0.0px;">Menu</div>
<div class="a" style="left:1779.8px;top:512.4px;width:11.2px;height:11.2px;background:#fff;border-radius:2.6px;box-shadow:0 0 0 .5px rgba(0,0,0,.25),0 .5px 1px rgba(0,0,0,.25);"></div>
<div class="t" style="left:1795.0px;top:513.1px;font-size:11.5px;color:#262626;font-weight:400;letter-spacing:0.08px;">Selection as Primary Acti...</div>
<div class="t" style="right:214.29999999999995px;top:531.4px;font-size:11px;color:#2e2e2e;font-weight:400;letter-spacing:0.0px;">Pointer</div>
<div class="a" style="left:1779.8px;top:530.4px;width:11.2px;height:11.2px;background:#fff;border-radius:2.6px;box-shadow:0 0 0 .5px rgba(0,0,0,.25),0 .5px 1px rgba(0,0,0,.25);"></div>
<div class="t" style="left:1795.0px;top:531.1px;font-size:11.5px;color:#262626;font-weight:400;letter-spacing:0.08px;">Interaction Enabled</div>
<div class="t" style="right:214.29999999999995px;top:549.4px;font-size:11px;color:#2e2e2e;font-weight:400;letter-spacing:0.0px;">Visibility</div>
<div class="a" style="left:1779.8px;top:548.4px;width:11.2px;height:11.2px;background:#fff;border-radius:2.6px;box-shadow:0 0 0 .5px rgba(0,0,0,.25),0 .5px 1px rgba(0,0,0,.25);"></div>
<div class="t" style="left:1795.0px;top:549.1px;font-size:11.5px;color:#262626;font-weight:400;letter-spacing:0.08px;">Adjusts Image Size</div>
<div class="t" style="right:214.29999999999995px;top:570.4px;font-size:11px;color:#2e2e2e;font-weight:400;letter-spacing:0.0px;">Title Offset</div>
<div class="a" style="left:1779px;top:567.0px;width:59px;height:16px;background:#fff;border:1px solid #d4d4d4;border-bottom-color:#bdbdbd;"></div>
<div class="t" style="right:153.4000000000001px;top:570.1px;font-size:11.5px;color:#262626;font-weight:400;letter-spacing:0.08px;">0</div>
<div class="a" style="left:1858.5px;top:567.0px;width:60.5px;height:16px;background:#fff;border:1px solid #d4d4d4;border-bottom-color:#bdbdbd;"></div>
<div class="t" style="right:72.40000000000009px;top:570.1px;font-size:11.5px;color:#262626;font-weight:400;letter-spacing:0.08px;">0</div>
<div class="a" style="left:1840px;top:567px;width:11px;height:16px;background:#fff;border-radius:4px;box-shadow:0 0 0 .5px rgba(0,0,0,.18),0 1px 1.5px rgba(0,0,0,.2);"></div>
<svg style="left:1842.5px;top:569.5px;" width="6" height="11" viewBox="0 0 6 11"><path d="M.8 3.8 L3 1.4 L5.2 3.8M.8 7.2 L3 9.6 L5.2 7.2" fill="none" stroke="#333" stroke-width="1.2" stroke-linecap="round" stroke-linejoin="round"/></svg>
<div class="a" style="left:1921px;top:567px;width:11px;height:16px;background:#fff;border-radius:4px;box-shadow:0 0 0 .5px rgba(0,0,0,.18),0 1px 1.5px rgba(0,0,0,.2);"></div>
<svg style="left:1923.5px;top:569.5px;" width="6" height="11" viewBox="0 0 6 11"><path d="M.8 3.8 L3 1.4 L5.2 3.8M.8 7.2 L3 9.6 L5.2 7.2" fill="none" stroke="#333" stroke-width="1.2" stroke-linecap="round" stroke-linejoin="round"/></svg>
<div class="t" style="left:1509.6px;width:600px;text-align:center;top:584.8px;font-size:11px;color:#2e2e2e;font-weight:400;letter-spacing:0.1px;">Width</div>
<div class="t" style="left:1586.8px;width:600px;text-align:center;top:584.8px;font-size:11px;color:#2e2e2e;font-weight:400;letter-spacing:0.1px;">Height</div>
<div class="a" style="left:1779.8px;top:603.4px;width:11.2px;height:11.2px;background:#fff;border-radius:2.6px;box-shadow:0 0 0 .5px rgba(0,0,0,.25),0 .5px 1px rgba(0,0,0,.25);"></div>
<div class="t" style="left:1795.0px;top:604.1px;font-size:11.5px;color:#262626;font-weight:400;letter-spacing:0.08px;">Reverses On Highlight</div>
<div class="t" style="right:214.29999999999995px;top:622.4px;font-size:11px;color:#2e2e2e;font-weight:400;letter-spacing:0.0px;">Drawing</div>
<div class="a" style="left:1779.8px;top:621.4px;width:11.2px;height:11.2px;background:#fff;border-radius:2.6px;box-shadow:0 0 0 .5px rgba(0,0,0,.25),0 .5px 1px rgba(0,0,0,.25);"></div>
<div class="t" style="left:1795.0px;top:622.1px;font-size:11.5px;color:#262626;font-weight:400;letter-spacing:0.08px;">Shows Touch On Highlight</div>
<div class="a" style="left:1779.8px;top:639.4px;width:11.2px;height:11.2px;background:#fff;border-radius:2.6px;box-shadow:0 0 0 .5px rgba(0,0,0,.25),0 .5px 1px rgba(0,0,0,.25);"></div>
<svg style="left:1781.5px;top:641px;" width="8.5" height="8.5" viewBox="0 0 8.5 8.5"><path d="M.8 4.6 L3.2 7.2 L7.6 .9" fill="none" stroke="#222" stroke-width="1.5" stroke-linecap="round" stroke-linejoin="round"/></svg>
<div class="t" style="left:1795.0px;top:640.1px;font-size:11.5px;color:#262626;font-weight:400;letter-spacing:0.08px;">Highlighted Adjusts Image</div>
<div class="a" style="left:1779.8px;top:657.4px;width:11.2px;height:11.2px;background:#fff;border-radius:2.6px;box-shadow:0 0 0 .5px rgba(0,0,0,.25),0 .5px 1px rgba(0,0,0,.25);"></div>
<svg style="left:1781.5px;top:659px;" width="8.5" height="8.5" viewBox="0 0 8.5 8.5"><path d="M.8 4.6 L3.2 7.2 L7.6 .9" fill="none" stroke="#222" stroke-width="1.5" stroke-linecap="round" stroke-linejoin="round"/></svg>
<div class="t" style="left:1795.0px;top:658.1px;font-size:11.5px;color:#262626;font-weight:400;letter-spacing:0.08px;">Disabled Adjusts Image</div>
<div class="t" style="right:214.29999999999995px;top:678.4px;font-size:11px;color:#2e2e2e;font-weight:400;letter-spacing:0.0px;">Line Break</div>
<div class="a" style="left:1779px;top:674.5px;width:153px;height:17px;background:#fff;border-radius:4.5px;box-shadow:0 0 0 .5px rgba(0,0,0,.14),0 1px 1.5px rgba(0,0,0,.22);"></div>
<div class="t" style="left:1785.5px;top:678.1px;font-size:11.5px;color:#262626;font-weight:400;letter-spacing:0.08px;">Truncate Middle</div>
<svg style="left:1920.5px;top:678px;" width="6" height="10" viewBox="0 0 6 10"><path d="M.8 3.6 L3 1.3 L5.2 3.6M.8 6.4 L3 8.7 L5.2 6.4" fill="none" stroke="#333" stroke-width="1.25" stroke-linecap="round" stroke-linejoin="round"/></svg>
<div class="t" style="right:214.29999999999995px;top:698.4px;font-size:11px;color:#2e2e2e;font-weight:400;letter-spacing:0.0px;">Drag and Drop</div>
<div class="a" style="left:1779.8px;top:697.4px;width:11.2px;height:11.2px;background:#fff;border-radius:2.6px;box-shadow:0 0 0 .5px rgba(0,0,0,.25),0 .5px 1px rgba(0,0,0,.25);"></div>
<div class="t" style="left:1795.0px;top:698.1px;font-size:11.5px;color:#262626;font-weight:400;letter-spacing:0.08px;">Spring Loaded</div>
<div class="t" style="right:214.29999999999995px;top:718.4px;font-size:11px;color:#2e2e2e;font-weight:400;letter-spacing:0.0px;">Behavior</div>
<div class="a" style="left:1779px;top:714.5px;width:153px;height:17px;background:#fff;border-radius:4.5px;box-shadow:0 0 0 .5px rgba(0,0,0,.14),0 1px 1.5px rgba(0,0,0,.22);"></div>
<div class="t" style="left:1785.5px;top:718.1px;font-size:11.5px;color:#262626;font-weight:400;letter-spacing:0.08px;">Automatic</div>
<svg style="left:1920.5px;top:718px;" width="6" height="10" viewBox="0 0 6 10"><path d="M.8 3.6 L3 1.3 L5.2 3.6M.8 6.4 L3 8.7 L5.2 6.4" fill="none" stroke="#333" stroke-width="1.25" stroke-linecap="round" stroke-linejoin="round"/></svg>
<div class="a" style="left:1702px;top:745px;width:230px;height:1px;background:#dddddd;"></div>
<div class="t" style="right:214.29999999999995px;top:779.9px;font-size:11px;color:#2e2e2e;font-weight:400;letter-spacing:0.0px;">Alignment</div>
<div class="a" style="left:1778.5px;top:775.5px;width:153.5px;height:18px;background:#e2e2e2;border-radius:5px;"></div>
<div class="a" style="left:1829px;top:776.5px;width:25.5px;height:16px;background:#fff;border-radius:4.5px;box-shadow:0 0 0 .5px rgba(0,0,0,.08),0 1px 2px rgba(0,0,0,.2);"></div>
<svg style="left:1785px;top:777.5px;" width="12" height="14" viewBox="0 0 12 14"><path d="M1 0V14" stroke="#2c2c2c" stroke-width="1.1"/><rect x="1" y="2" width="9.6" height="9.6" fill="none" stroke="#2c2c2c" stroke-width="1.1"/><path d="M4.4 4.6V9H7.4" fill="none" stroke="#2c2c2c" stroke-width="1"/></svg>
<svg style="left:1810px;top:777.5px;" width="12" height="14" viewBox="0 0 12 14"><path d="M1 0V14" stroke="#2c2c2c" stroke-width="1.1"/><rect x="1" y="2" width="10" height="9.6" fill="none" stroke="#2c2c2c" stroke-width="1.1"/></svg>
<svg style="left:1835.7px;top:777.5px;" width="12" height="14" viewBox="0 0 12 14"><path d="M6 0V14" stroke="#2c2c2c" stroke-width="1.1"/><rect x="1" y="2" width="10" height="9.6" fill="none" stroke="#2c2c2c" stroke-width="1.1"/></svg>
<svg style="left:1861px;top:777.5px;" width="12" height="14" viewBox="0 0 12 14"><path d="M11 0V14" stroke="#2c2c2c" stroke-width="1.1"/><rect x="1.4" y="2" width="9.6" height="9.6" fill="none" stroke="#2c2c2c" stroke-width="1.1"/><path d="M4 5H8.4M6.2 5V9.4" fill="none" stroke="#2c2c2c" stroke-width="1"/></svg>
<svg style="left:1887px;top:777.5px;" width="12" height="14" viewBox="0 0 12 14"><path d="M11 0V14" stroke="#2c2c2c" stroke-width="1.1"/><rect x="1" y="2" width="10" height="9.6" fill="none" stroke="#2c2c2c" stroke-width="1.1"/></svg>
<svg style="left:1913px;top:777.5px;" width="12" height="14" viewBox="0 0 12 14"><rect x=".6" y="2" width="10.8" height="9.6" fill="none" stroke="#2c2c2c" stroke-width="1.1"/><path d="M2.4 6.8H9.6M4 5.2 L2.4 6.8 L4 8.4M8 5.2 L9.6 6.8 L8 8.4" fill="none" stroke="#2c2c2c" stroke-width="1"/></svg>
<div class="a" style="left:1803.8px;top:780px;width:1px;height:9px;background:#cfcfcf;"></div>
<div class="a" style="left:1880px;top:780px;width:1px;height:9px;background:#cfcfcf;"></div>
<div class="a" style="left:1905.8px;top:780px;width:1px;height:9px;background:#cfcfcf;"></div>
<div class="t" style="left:1555px;width:600px;text-align:center;top:795.5px;font-size:11px;color:#2e2e2e;font-weight:400;letter-spacing:0.1px;">Horizontal</div>
<div class="a" style="left:1778.5px;top:810.5px;width:150px;height:17.5px;background:#e2e2e2;border-radius:5px;"></div>
<div class="a" style="left:1816px;top:811.5px;width:37px;height:15.5px;background:#fff;border-radius:4.5px;box-shadow:0 0 0 .5px rgba(0,0,0,.08),0 1px 2px rgba(0,0,0,.2);"></div>
<svg style="left:1789.5px;top:813.3px;" width="14" height="12" viewBox="0 0 14 12"><path d="M0 1H14" stroke="#2c2c2c" stroke-width="1.1"/><rect x="2" y="1" width="10" height="9.6" fill="none" stroke="#2c2c2c" stroke-width="1.1"/></svg>
<svg style="left:1827.5px;top:813.3px;" width="14" height="12" viewBox="0 0 14 12"><path d="M0 6H14" stroke="#2c2c2c" stroke-width="1.1"/><rect x="2" y="1.2" width="10" height="9.6" fill="none" stroke="#2c2c2c" stroke-width="1.1"/></svg>
<svg style="left:1865.5px;top:813.3px;" width="14" height="12" viewBox="0 0 14 12"><path d="M0 11H14" stroke="#2c2c2c" stroke-width="1.1"/><rect x="2" y="1.4" width="10" height="9.6" fill="none" stroke="#2c2c2c" stroke-width="1.1"/></svg>
<svg style="left:1903.5px;top:813.3px;" width="14" height="12" viewBox="0 0 14 12"><rect x="2" y=".6" width="10" height="10.8" fill="none" stroke="#2c2c2c" stroke-width="1.1"/><path d="M7 2.4V9.6M5.4 4 L7 2.4 L8.6 4M5.4 8 L7 9.6 L8.6 8" fill="none" stroke="#2c2c2c" stroke-width="1"/></svg>
<div class="a" style="left:1891px;top:815px;width:1px;height:9px;background:#cfcfcf;"></div>
<div class="t" style="left:1555px;width:600px;text-align:center;top:830.8px;font-size:11px;color:#2e2e2e;font-weight:400;letter-spacing:0.1px;">Vertical</div>
<div class="a" style="left:1702px;top:845.5px;width:230px;height:1px;background:#dddddd;"></div>
<div class="t" style="right:214.29999999999995px;top:852.4px;font-size:11px;color:#2e2e2e;font-weight:400;letter-spacing:0.0px;">Menu</div>
<div class="a" style="left:1779.8px;top:851.4px;width:11.2px;height:11.2px;background:#fff;border-radius:2.6px;box-shadow:0 0 0 .5px rgba(0,0,0,.25),0 .5px 1px rgba(0,0,0,.25);"></div>
<div class="t" style="left:1795.0px;top:852.1px;font-size:11.5px;color:#262626;font-weight:400;letter-spacing:0.08px;">Shows as Primary Action</div>
<div class="a" style="left:1702px;top:868px;width:230px;height:1px;background:#dddddd;"></div>
<div class="t" style="right:214.29999999999995px;top:875.4px;font-size:11px;color:#2e2e2e;font-weight:400;letter-spacing:0.0px;">State</div>
<div class="a" style="left:1779.8px;top:874.4px;width:11.2px;height:11.2px;background:#fff;border-radius:2.6px;box-shadow:0 0 0 .5px rgba(0,0,0,.25),0 .5px 1px rgba(0,0,0,.25);"></div>
<div class="t" style="left:1795.0px;top:875.1px;font-size:11.5px;color:#262626;font-weight:400;letter-spacing:0.08px;">Selected</div>
<div class="a" style="left:1779.8px;top:892.6px;width:11.2px;height:11.2px;background:#fff;border-radius:2.6px;box-shadow:0 0 0 .5px rgba(0,0,0,.25),0 .5px 1px rgba(0,0,0,.25);"></div>
<svg style="left:1781.5px;top:894.2px;" width="8.5" height="8.5" viewBox="0 0 8.5 8.5"><path d="M.8 4.6 L3.2 7.2 L7.6 .9" fill="none" stroke="#222" stroke-width="1.5" stroke-linecap="round" stroke-linejoin="round"/></svg>
<div class="t" style="left:1795.0px;top:893.4px;font-size:11.5px;color:#262626;font-weight:400;letter-spacing:0.08px;">Enabled</div>
<div class="a" style="left:1779.8px;top:910.4px;width:11.2px;height:11.2px;background:#fff;border-radius:2.6px;box-shadow:0 0 0 .5px rgba(0,0,0,.25),0 .5px 1px rgba(0,0,0,.25);"></div>
<div class="t" style="left:1795.0px;top:911.1px;font-size:11.5px;color:#262626;font-weight:400;letter-spacing:0.08px;">Highlighted</div>
<div class="a" style="left:1702px;top:927.5px;width:230px;height:1px;background:#dddddd;"></div>
<div class="t" style="right:214.29999999999995px;top:937.4px;font-size:11px;color:#2e2e2e;font-weight:400;letter-spacing:0.0px;">Tooltip</div>
<div class="a" style="left:1779px;top:933.8px;width:153px;height:17px;background:#fff;border:1px solid #d4d4d4;border-bottom-color:#bdbdbd;"></div>
<div class="t" style="left:1783px;top:937.4px;font-size:11.5px;color:#bcbcbc;font-weight:400;letter-spacing:0.08px;">Tooltip</div>
<div class="a" style="left:1702px;top:963px;width:230px;height:1px;background:#dddddd;"></div>
<div class="t" style="left:1701.7px;top:970.2px;font-size:12.5px;color:#5c5c5c;font-weight:700;letter-spacing:-0.119px;">View</div>
<div class="a" style="left:1943.2px;top:95.5px;width:7.8px;height:627px;background:#c1c1c1;border-radius:3.9px;"></div>
<div class="a" style="left:1488px;top:494px;width:265.5999999999999px;height:319.5px;border-radius:10px;background:#e4e4e4;box-shadow:0 0 0 .7px rgba(0,0,0,.22),0 6px 18px rgba(0,0,0,.22),0 1px 4px rgba(0,0,0,.12);"></div>
<svg style="left:1605px;top:812.5px;" width="32" height="15" viewBox="0 0 32 15"><path d="M0 .6 H32 Q26 .8 22.4 5.4 L17.6 12.6 Q16 14.6 14.4 12.6 L9.6 5.4 Q6 .8 0 .6Z" fill="#e4e4e4"/><path d="M1 1 Q6.4 1.2 9.6 5.4 L14.4 12.6 Q16 14.6 17.6 12.6 L22.4 5.4 Q25.6 1.2 31 1" fill="none" stroke="rgba(0,0,0,.2)" stroke-width=".8"/></svg>
<div class="a" style="left:1607px;top:811px;width:28px;height:2.4px;background:#e4e4e4;"></div>
<div class="t" style="left:1498.5px;top:506.2px;font-size:11.5px;color:#1a1a1a;font-weight:700;letter-spacing:0.001px;">Add New Constraints</div>
<div class="a" style="left:1587px;top:528.5px;width:67.5px;height:15.0px;background:#d7d7d7;border-radius:1px;"></div>
<div class="a" style="left:1590px;top:530.0px;width:14px;height:12.0px;background:#a9c4f2;"></div>
<div class="t" style="left:1591px;top:531.0px;font-size:11.5px;color:#1a1a1a;font-weight:400;letter-spacing:0.0px;">30</div>
<svg style="left:1645.5px;top:534.0px;" width="6" height="4.4" viewBox="0 0 6 4.4"><path d="M.7 .7 L3 3.2 L5.3 .7" fill="none" stroke="#5a5a5a" stroke-width="1.1" stroke-linecap="round" stroke-linejoin="round"/></svg>
<div class="a" style="left:1523.5px;top:566px;width:67.5px;height:14.5px;background:#d7d7d7;border-radius:1px;"></div>
<div class="t" style="left:1527.5px;top:568.3px;font-size:11.5px;color:#1a1a1a;font-weight:400;letter-spacing:0.0px;">159</div>
<svg style="left:1582px;top:571.25px;" width="6" height="4.4" viewBox="0 0 6 4.4"><path d="M.7 .7 L3 3.2 L5.3 .7" fill="none" stroke="#5a5a5a" stroke-width="1.1" stroke-linecap="round" stroke-linejoin="round"/></svg>
<div class="a" style="left:1650px;top:566px;width:67.5px;height:14.5px;background:#d7d7d7;border-radius:1px;"></div>
<div class="t" style="left:1654px;top:568.3px;font-size:11.5px;color:#1a1a1a;font-weight:400;letter-spacing:0.0px;">159</div>
<svg style="left:1708.5px;top:571.25px;" width="6" height="4.4" viewBox="0 0 6 4.4"><path d="M.7 .7 L3 3.2 L5.3 .7" fill="none" stroke="#5a5a5a" stroke-width="1.1" stroke-linecap="round" stroke-linejoin="round"/></svg>
<div class="a" style="left:1587px;top:603.5px;width:67.5px;height:15.0px;background:#d7d7d7;border-radius:1px;"></div>
<div class="t" style="left:1591px;top:606.0px;font-size:11.5px;color:#1a1a1a;font-weight:400;letter-spacing:0.0px;">315</div>
<svg style="left:1645.5px;top:609.0px;" width="6" height="4.4" viewBox="0 0 6 4.4"><path d="M.7 .7 L3 3.2 L5.3 .7" fill="none" stroke="#5a5a5a" stroke-width="1.1" stroke-linecap="round" stroke-linejoin="round"/></svg>
<div class="a" style="left:1613px;top:568.5px;width:15.5px;height:12px;background:#efefef;border:1px solid #9b9b9b;"></div>
<svg style="left:1595.5px;top:568.5px;" width="16" height="8" viewBox="0 0 16 8"><path d="M.5 4H15.5" stroke="#f2a49c" stroke-width="1" stroke-dasharray="2 1.4"/><path d="M.5 .5V7.5M15.5 .5V7.5" stroke="#f2a49c" stroke-width="1" stroke-dasharray="1.6 1.2"/></svg>
<svg style="left:1630.5px;top:568.5px;" width="16" height="8" viewBox="0 0 16 8"><path d="M.5 4H15.5" stroke="#f2a49c" stroke-width="1" stroke-dasharray="2 1.4"/><path d="M.5 .5V7.5M15.5 .5V7.5" stroke="#f2a49c" stroke-width="1" stroke-dasharray="1.6 1.2"/></svg>
<svg style="left:1616.5px;top:583.5px;" width="8" height="15" viewBox="0 0 8 15"><path d="M4 .5V14.5" stroke="#f2a49c" stroke-width="1" stroke-dasharray="2 1.4"/><path d="M.5 .5H7.5M.5 14.5H7.5" stroke="#f2a49c" stroke-width="1" stroke-dasharray="1.6 1.2"/></svg>
<svg style="left:1616px;top:548px;" width="9" height="15" viewBox="0 0 9 15"><path d="M4.5 .6V14.4M.8 .6H8.2M.8 14.4H8.2" stroke="#d8362c" stroke-width="1.2"/></svg>
<div class="a" style="left:1600.8px;top:539.3px;width:38.8px;height:29.5px;border:4.2px solid #d0081f;border-radius:2px;"></div>
<div class="t" style="left:1320.9px;width:600px;text-align:center;top:626.2px;font-size:11.5px;color:#1a1a1a;font-weight:400;letter-spacing:0.13px;">Spacing to nearest neighbor</div>
<div class="a" style="left:1557px;top:647px;width:12.4px;height:12.4px;background:#2f7cf6;border-radius:3px;box-shadow:0 .5px 1px rgba(0,0,0,.25);"></div>
<svg style="left:1559.4px;top:649.6px;" width="8" height="7.4" viewBox="0 0 8 7.4"><path d="M.9 3.9 L3 6.2 L7 .9" fill="none" stroke="#fff" stroke-width="1.6" stroke-linecap="round" stroke-linejoin="round"/></svg>
<div class="t" style="left:1573.4px;top:648.2px;font-size:11.5px;color:#1a1a1a;font-weight:400;letter-spacing:0.09px;">Constrain to margins</div>
<div class="a" style="left:1494px;top:664.5px;width:254px;height:1px;background:#d2d2d2;"></div>
<div class="a" style="left:1498px;top:672px;width:12px;height:12px;background:#c9c9c9;border-radius:2.4px;"></div>
<svg style="left:1514.5px;top:674px;" width="12" height="8" viewBox="0 0 12 8"><path d="M.6 4H11.4M.6 1V7M11.4 1V7" stroke="#2f63e6" stroke-width="1.2"/></svg>
<div class="t" style="left:1533.3px;top:673.9px;font-size:11.5px;color:#1a1a1a;font-weight:400;letter-spacing:0.126px;">Width</div>
<div class="a" style="left:1675.5px;top:671.5px;width:66.5px;height:15.0px;background:#d7d7d7;border-radius:1px;"></div>
<div class="t" style="left:1679.5px;top:674.0px;font-size:11.5px;color:#1a1a1a;font-weight:400;letter-spacing:0.0px;">75</div>
<svg style="left:1733px;top:677.0px;" width="6" height="4.4" viewBox="0 0 6 4.4"><path d="M.7 .7 L3 3.2 L5.3 .7" fill="none" stroke="#5a5a5a" stroke-width="1.1" stroke-linecap="round" stroke-linejoin="round"/></svg>
<div class="a" style="left:1498px;top:693px;width:12px;height:12px;background:#c9c9c9;border-radius:2.4px;"></div>
<svg style="left:1516.5px;top:692.5px;" width="7" height="13" viewBox="0 0 7 13"><path d="M3.5 .6V12.4M.6 .6H6.4M.6 12.4H6.4" stroke="#2f63e6" stroke-width="1.2"/></svg>
<div class="t" style="left:1533.3px;top:694.9px;font-size:11.5px;color:#1a1a1a;font-weight:400;letter-spacing:0.052px;">Height</div>
<div class="a" style="left:1675.5px;top:692.5px;width:66.5px;height:15.0px;background:#d7d7d7;border-radius:1px;"></div>
<div class="t" style="left:1679.5px;top:695.0px;font-size:11.5px;color:#1a1a1a;font-weight:400;letter-spacing:0.0px;">35</div>
<svg style="left:1733px;top:698.0px;" width="6" height="4.4" viewBox="0 0 6 4.4"><path d="M.7 .7 L3 3.2 L5.3 .7" fill="none" stroke="#5a5a5a" stroke-width="1.1" stroke-linecap="round" stroke-linejoin="round"/></svg>
<div class="a" style="left:1494px;top:713.5px;width:254px;height:1px;background:#d2d2d2;"></div>
<div class="a" style="left:1498px;top:721.5px;width:12px;height:12px;background:#dcdcdc;border-radius:2.4px;"></div>
<svg style="left:1514.5px;top:722px;" width="12" height="11" viewBox="0 0 12 11"><rect x="0" y="0" width="12" height="4.6" rx="1" fill="#9aa8ea"/><rect x="0" y="6.2" width="12" height="4.6" rx="1" fill="#9aa8ea"/></svg>
<div class="t" style="left:1533.3px;top:722.9px;font-size:11.5px;color:#a9a9a9;font-weight:400;letter-spacing:0.068px;">Equal Widths</div>
<div class="a" style="left:1498px;top:742.5px;width:12px;height:12px;background:#dcdcdc;border-radius:2.4px;"></div>
<svg style="left:1514.5px;top:743px;" width="12" height="11" viewBox="0 0 12 11"><rect x="0" y="0" width="5" height="11" rx="1" fill="#9aa8ea"/><rect x="6.6" y="0" width="5" height="11" rx="1" fill="#9aa8ea"/></svg>
<div class="t" style="left:1533.3px;top:744.0px;font-size:11.5px;color:#a9a9a9;font-weight:400;letter-spacing:0.034px;">Equal Heights</div>
<div class="a" style="left:1498px;top:763.5px;width:12px;height:12px;background:#c9c9c9;border-radius:2.4px;"></div>
<svg style="left:1514.5px;top:764px;" width="12" height="11" viewBox="0 0 12 11"><rect x="0" y="0" width="12" height="11" rx="1.6" fill="#2f63e6"/><path d="M2.6 10V4.2H9.4V10M6 4.2V8.6" fill="none" stroke="#fff" stroke-width="1.3"/></svg>
<div class="t" style="left:1533.3px;top:765.0px;font-size:11.5px;color:#1a1a1a;font-weight:400;letter-spacing:0.073px;">Aspect Ratio</div>
<div class="a" style="left:1494.2px;top:784.8px;width:253.2px;height:22.6px;background:#e9e9e9;border:4.2px solid #d0081f;border-radius:2px;"></div>
<div class="a" style="left:1499.2px;top:789.6px;width:243.2px;height:13.2px;background:#e9e9e9;border-radius:2px;box-shadow:0 0 0 .5px rgba(0,0,0,.2),0 1px 1px rgba(0,0,0,.15);"></div>
<div class="t" style="left:1320.7px;width:600px;text-align:center;top:791.9px;font-size:11.5px;color:#1c1c1c;font-weight:400;letter-spacing:0.03px;">Add 1 Constraint</div></div></div></body></html>
